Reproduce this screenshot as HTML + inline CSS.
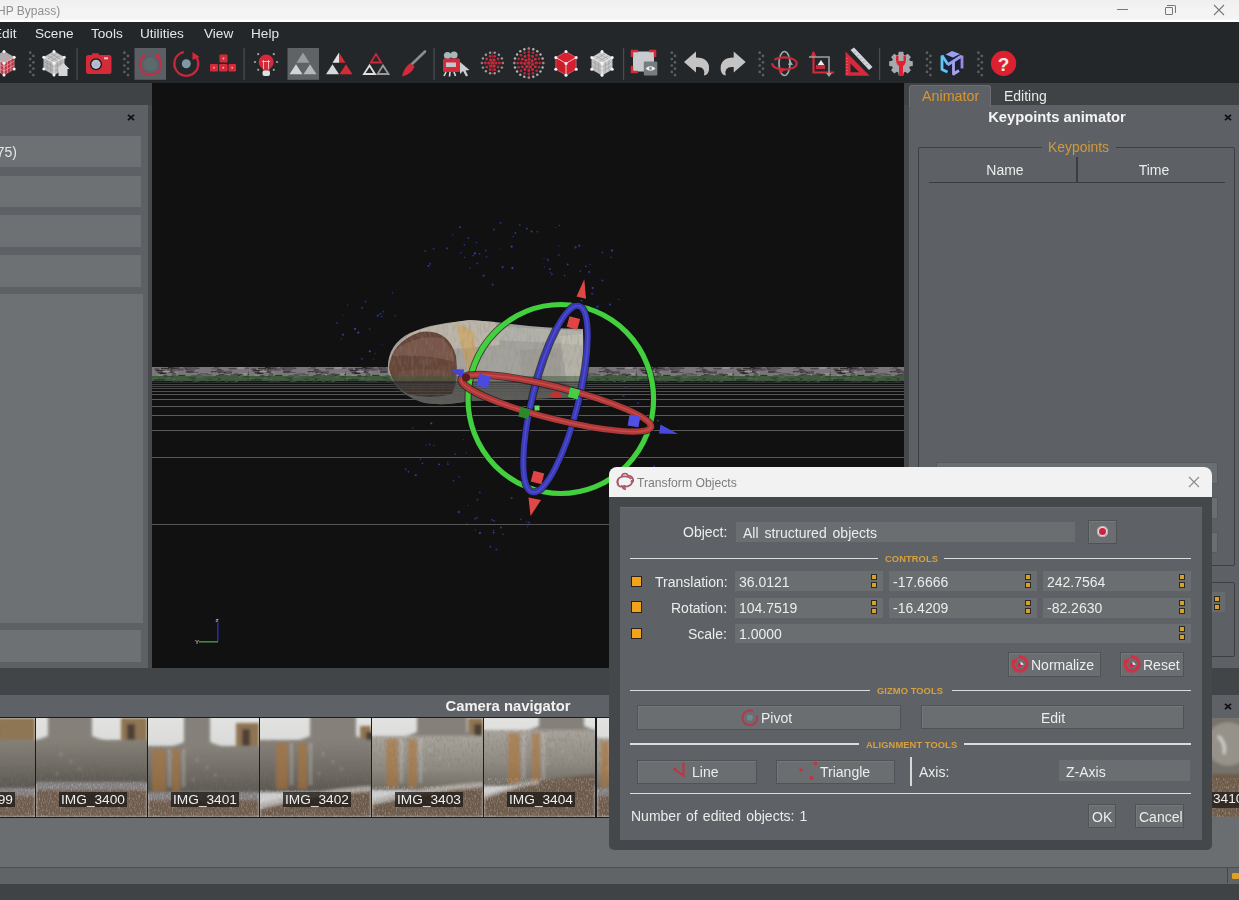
<!DOCTYPE html>
<html><head><meta charset="utf-8">
<style>
*{box-sizing:border-box;margin:0;padding:0}
html,body{width:1239px;height:900px;overflow:hidden;background:#3f4245;font-family:"Liberation Sans",sans-serif;position:relative}
.a{position:absolute}
.t{white-space:nowrap;position:absolute;will-change:transform}
</style></head><body>
<!-- title bar -->
<div class="a" style="left:0;top:0;width:1239px;height:22px;background:linear-gradient(#efefef,#f3f3f3 40%,#f4f4f6 85%,#fdfdfd 92%,#ffffff)"></div>
<div class="t" style="left:-3.5px;top:5.34px;font-size:12px;line-height:12px;color:#8e8e8e">HP Bypass)</div>
<div class="a" style="left:1117px;top:9px;width:11px;height:1px;background:#7a7a7a"></div>
<div class="a" style="left:1165px;top:7px;width:8px;height:8px;border:1px solid #777;border-radius:1px"></div>
<div class="a" style="left:1167px;top:5px;width:9px;height:8px;border-top:1px solid #777;border-right:1px solid #777;border-radius:0 2px 0 0"></div>
<svg class="a" style="left:1213px;top:4px" width="12" height="12"><path d="M1 1L11 11M11 1L1 11" stroke="#777" stroke-width="1.1"/></svg>

<!-- menu + toolbar -->
<div class="a" style="left:0;top:22px;width:1239px;height:61px;background:#24272a"></div>
<div class="t" style="left:-7px;top:26px;font-size:13.6px;color:#e6e6e6">Edit</div>
<div class="t" style="left:35px;top:26px;font-size:13.6px;color:#e6e6e6">Scene</div>
<div class="t" style="left:91px;top:26px;font-size:13.6px;color:#e6e6e6">Tools</div>
<div class="t" style="left:140px;top:26px;font-size:13.6px;color:#e6e6e6">Utilities</div>
<div class="t" style="left:204px;top:26px;font-size:13.6px;color:#e6e6e6">View</div>
<div class="t" style="left:251px;top:26px;font-size:13.6px;color:#e6e6e6">Help</div>

<!--B:toolbar-->
<svg class="a" style="left:0;top:44px" width="1239" height="39" viewBox="0 44 1239 39"><polygon points="4.0,51.4 14.2,57.3 4.0,63.2 -6.2,57.3" fill="#9fb0b2"/><polygon points="-6.2,57.3 4.0,63.2 4.0,75.0 -6.2,69.1" fill="#b8384a"/><polygon points="4.0,63.2 14.2,57.3 14.2,69.1 4.0,75.0" fill="#c63246"/><line x1="-2.8" y1="59.3" x2="-2.8" y2="71.1" stroke="#e0a0a8" stroke-width="0.7"/><line x1="7.4" y1="61.2" x2="7.4" y2="73.0" stroke="#e0a0a8" stroke-width="0.7"/><line x1="-6.2" y1="61.2" x2="4.0" y2="67.1" stroke="#e0a0a8" stroke-width="0.7"/><line x1="4.0" y1="67.1" x2="14.2" y2="61.2" stroke="#e0a0a8" stroke-width="0.7"/><line x1="-2.8" y1="55.3" x2="7.4" y2="61.2" stroke="#e0a0a8" stroke-width="0.7"/><line x1="7.4" y1="53.4" x2="-2.8" y2="59.3" stroke="#e0a0a8" stroke-width="0.7"/><line x1="0.6" y1="61.2" x2="0.6" y2="73.0" stroke="#e0a0a8" stroke-width="0.7"/><line x1="10.8" y1="59.3" x2="10.8" y2="71.1" stroke="#e0a0a8" stroke-width="0.7"/><line x1="-6.2" y1="65.2" x2="4.0" y2="71.1" stroke="#e0a0a8" stroke-width="0.7"/><line x1="4.0" y1="71.1" x2="14.2" y2="65.2" stroke="#e0a0a8" stroke-width="0.7"/><line x1="0.6" y1="53.4" x2="10.8" y2="59.3" stroke="#e0a0a8" stroke-width="0.7"/><line x1="10.8" y1="55.3" x2="0.6" y2="61.2" stroke="#e0a0a8" stroke-width="0.7"/><polyline points="-6.2,57.3 4.0,63.2 14.2,57.3" fill="none" stroke="#e8d0d4" stroke-width="0.9"/><line x1="4" y1="63.2" x2="4" y2="75.0" stroke="#e8d0d4" stroke-width="0.9"/><polygon points="4.0,51.4 14.2,57.3 14.2,69.1 4.0,75.0 -6.2,69.1 -6.2,57.3" fill="none" stroke="#e8d0d4" stroke-width="0.6" opacity="0.6"/><circle cx="4.0" cy="51.4" r="1.5" fill="#f4f4f4"/><circle cx="14.2" cy="57.3" r="1.5" fill="#f4f4f4"/><circle cx="14.2" cy="69.1" r="1.5" fill="#f4f4f4"/><circle cx="4.0" cy="75.0" r="1.5" fill="#f4f4f4"/><circle cx="-6.2" cy="69.1" r="1.5" fill="#f4f4f4"/><circle cx="-6.2" cy="57.3" r="1.5" fill="#f4f4f4"/><circle cx="4.0" cy="63.2" r="1.5" fill="#f4f4f4"/><circle cx="30.2" cy="52.7" r="1.35" fill="#5c5f62"/><circle cx="33.4" cy="55.9" r="1.35" fill="#5c5f62"/><circle cx="30.2" cy="59.1" r="1.35" fill="#5c5f62"/><circle cx="33.4" cy="62.3" r="1.35" fill="#5c5f62"/><circle cx="30.2" cy="65.5" r="1.35" fill="#5c5f62"/><circle cx="33.4" cy="68.7" r="1.35" fill="#5c5f62"/><circle cx="30.2" cy="71.9" r="1.35" fill="#5c5f62"/><circle cx="33.4" cy="75.1" r="1.35" fill="#5c5f62"/><polygon points="54.0,51.4 64.2,57.3 54.0,63.2 43.8,57.3" fill="#c8c8c8"/><polygon points="43.8,57.3 54.0,63.2 54.0,75.0 43.8,69.1" fill="#b4b4b4"/><polygon points="54.0,63.2 64.2,57.3 64.2,69.1 54.0,75.0" fill="#bebebe"/><line x1="47.2" y1="59.3" x2="47.2" y2="71.1" stroke="#9a9a9a" stroke-width="0.7"/><line x1="57.4" y1="61.2" x2="57.4" y2="73.0" stroke="#9a9a9a" stroke-width="0.7"/><line x1="43.8" y1="61.2" x2="54.0" y2="67.1" stroke="#9a9a9a" stroke-width="0.7"/><line x1="54.0" y1="67.1" x2="64.2" y2="61.2" stroke="#9a9a9a" stroke-width="0.7"/><line x1="47.2" y1="55.3" x2="57.4" y2="61.2" stroke="#9a9a9a" stroke-width="0.7"/><line x1="57.4" y1="53.4" x2="47.2" y2="59.3" stroke="#9a9a9a" stroke-width="0.7"/><line x1="50.6" y1="61.2" x2="50.6" y2="73.0" stroke="#9a9a9a" stroke-width="0.7"/><line x1="60.8" y1="59.3" x2="60.8" y2="71.1" stroke="#9a9a9a" stroke-width="0.7"/><line x1="43.8" y1="65.2" x2="54.0" y2="71.1" stroke="#9a9a9a" stroke-width="0.7"/><line x1="54.0" y1="71.1" x2="64.2" y2="65.2" stroke="#9a9a9a" stroke-width="0.7"/><line x1="50.6" y1="53.4" x2="60.8" y2="59.3" stroke="#9a9a9a" stroke-width="0.7"/><line x1="60.8" y1="55.3" x2="50.6" y2="61.2" stroke="#9a9a9a" stroke-width="0.7"/><polyline points="43.8,57.3 54.0,63.2 64.2,57.3" fill="none" stroke="#eeeeee" stroke-width="0.9"/><line x1="54" y1="63.2" x2="54" y2="75.0" stroke="#eeeeee" stroke-width="0.9"/><polygon points="54.0,51.4 64.2,57.3 64.2,69.1 54.0,75.0 43.8,69.1 43.8,57.3" fill="none" stroke="#eeeeee" stroke-width="0.6" opacity="0.6"/><circle cx="54.0" cy="51.4" r="1.5" fill="#f4f4f4"/><circle cx="64.2" cy="57.3" r="1.5" fill="#f4f4f4"/><circle cx="64.2" cy="69.1" r="1.5" fill="#f4f4f4"/><circle cx="54.0" cy="75.0" r="1.5" fill="#f4f4f4"/><circle cx="43.8" cy="69.1" r="1.5" fill="#f4f4f4"/><circle cx="43.8" cy="57.3" r="1.5" fill="#f4f4f4"/><circle cx="54.0" cy="63.2" r="1.5" fill="#f4f4f4"/><path d="M63.5 63 L69.5 69 L67.5 69 L67.5 76 L58.5 76 L58.5 69 L57 69 Z" fill="#d6d6d6"/><rect x="76.5" y="48" width="1.2" height="32" fill="#4a4d50"/><rect x="86" y="55" width="25.5" height="19" rx="2.5" fill="#d42a3a"/><rect x="92" y="53.3" width="7" height="3" rx="1" fill="#d42a3a"/><circle cx="96" cy="64.3" r="6" fill="#2a1a1e"/><circle cx="96" cy="64.3" r="4.6" fill="#a8c8d0"/><circle cx="96" cy="64.3" r="2.2" fill="#c8a8d8"/><rect x="104" y="57.3" width="4" height="2" fill="#f0c0c0"/><circle cx="124.4" cy="52.7" r="1.35" fill="#5c5f62"/><circle cx="128" cy="55.9" r="1.35" fill="#5c5f62"/><circle cx="124.4" cy="59.1" r="1.35" fill="#5c5f62"/><circle cx="128" cy="62.3" r="1.35" fill="#5c5f62"/><circle cx="124.4" cy="65.5" r="1.35" fill="#5c5f62"/><circle cx="128" cy="68.7" r="1.35" fill="#5c5f62"/><circle cx="124.4" cy="71.9" r="1.35" fill="#5c5f62"/><circle cx="128" cy="75.1" r="1.35" fill="#5c5f62"/><rect x="134.5" y="48" width="31.5" height="31.8" fill="#5a5f63"/><circle cx="150.3" cy="64.5" r="10.5" fill="none" stroke="#b83248" stroke-width="2.2" stroke-dasharray="52 14" transform="rotate(-40 150.3 64.5)"/><path d="M155 53.5 L161 55 L158 60.5 Z" fill="#c83048"/><circle cx="150.3" cy="64.5" r="7" fill="#5e7074" opacity="0.6"/><circle cx="186.3" cy="63.8" r="12" fill="none" stroke="#c8283c" stroke-width="2.2" stroke-dasharray="60 16" transform="rotate(-30 186.3 63.8)"/><path d="M192.5 52 L199.5 57 L192.5 60 Z" fill="#d8283c"/><circle cx="186.3" cy="63.8" r="4.5" fill="#7e98a4"/><rect x="219.5" y="54.5" width="8" height="8" rx="1" fill="#d42a3a"/><rect x="210" y="64" width="8" height="7.5" rx="1" fill="#d42a3a"/><rect x="219" y="64" width="8.5" height="7.5" rx="1" fill="#d42a3a"/><rect x="228.5" y="64" width="7.5" height="7.5" rx="1" fill="#d42a3a"/><circle cx="223.5" cy="58.5" r="0.9" fill="#f0b0b8"/><circle cx="214" cy="67.7" r="0.9" fill="#f0b0b8"/><circle cx="223.2" cy="67.7" r="0.9" fill="#f0b0b8"/><circle cx="232.2" cy="67.7" r="0.9" fill="#f0b0b8"/><rect x="243.5" y="48" width="1.2" height="32" fill="#4a4d50"/><circle cx="277.0" cy="62.0" r="1.1" fill="#b0a0a0"/><circle cx="273.8" cy="54.2" r="1.1" fill="#b0a0a0"/><circle cx="258.2" cy="54.2" r="1.1" fill="#b0a0a0"/><circle cx="255.0" cy="62.0" r="1.1" fill="#b0a0a0"/><circle cx="258.2" cy="69.8" r="1.1" fill="#b0a0a0"/><circle cx="273.8" cy="69.8" r="1.1" fill="#b0a0a0"/><circle cx="266.2" cy="62" r="7.5" fill="#d42a3a"/><path d="M262 66 L270.5 66 L269.5 71 L263 71Z" fill="#d42a3a"/><path d="M263.5 60 V69 M268.5 60 V69 M262 61.5 H270" stroke="#f4c0c8" stroke-width="0.9" fill="none"/><rect x="262.5" y="70.5" width="7.5" height="5.5" rx="2" fill="#d8e4e0"/><rect x="287.5" y="48" width="31.5" height="31.8" fill="#5f6366"/><polygon points="303,52.5 296.5,62.8 309.5,62.8" fill="#9a9c9e"/><polygon points="296,64.2 289.5,74.3 302.5,74.3" fill="#d4d4d4"/><polygon points="310,64.2 303.5,74.3 316.5,74.3" fill="#b8b8b8"/><polygon points="339,52.5 332.5,62.8 339,62.8" fill="#e4e4e4"/><polygon points="339,52.5 345.5,62.8 339,62.8" fill="#d42a3a"/><polygon points="332.5,64.2 326,74.3 339,74.3" fill="#d8d8d8"/><polygon points="346,64.2 339.5,74.3 352.5,74.3" fill="#d42a3a"/><polygon points="376,54 370.8,62.5 381.2,62.5" fill="none" stroke="#c8283c" stroke-width="1.8"/><polygon points="369.5,65.5 364,74 375,74" fill="none" stroke="#dedede" stroke-width="1.8"/><polygon points="383,65.5 377.5,74 388.5,74" fill="none" stroke="#9a9a9a" stroke-width="1.8"/><line x1="425" y1="51.5" x2="412" y2="64" stroke="#8a8c90" stroke-width="2.6" stroke-linecap="round"/><path d="M410.5 63 L414.5 66.5 Q412 74 402 76.5 Q403.5 68 410.5 63Z" fill="#d42a3a"/><rect x="433.5" y="48" width="1.2" height="32" fill="#4a4d50"/><circle cx="447.5" cy="55.5" r="3.6" fill="#a8b8b8"/><circle cx="454" cy="55" r="3.6" fill="#a8b8b8"/><rect x="443" y="58.5" width="17" height="13.5" rx="1.5" fill="#d42a3a"/><rect x="446" y="62.5" width="10" height="4.5" fill="#c0c8d0"/><path d="M446 72 L444 76 M450 72 L449.5 76.5 M454 72 L455.5 76" stroke="#dcdcdc" stroke-width="1.6"/><path d="M460 62 L460 74 L463 71 L466 76.5 L468 75.5 L465.5 70.5 L469.5 70 Z" fill="#c8d0d0"/><circle cx="502.9" cy="63.0" r="1.2" fill="#9a9a9a"/><circle cx="501.9" cy="67.6" r="1.2" fill="#9a9a9a"/><circle cx="498.9" cy="71.2" r="1.2" fill="#9a9a9a"/><circle cx="494.7" cy="73.2" r="1.2" fill="#9a9a9a"/><circle cx="490.1" cy="73.2" r="1.2" fill="#9a9a9a"/><circle cx="485.9" cy="71.2" r="1.2" fill="#9a9a9a"/><circle cx="482.9" cy="67.6" r="1.2" fill="#9a9a9a"/><circle cx="481.9" cy="63.0" r="1.2" fill="#9a9a9a"/><circle cx="482.9" cy="58.4" r="1.2" fill="#9a9a9a"/><circle cx="485.9" cy="54.8" r="1.2" fill="#9a9a9a"/><circle cx="490.1" cy="52.8" r="1.2" fill="#9a9a9a"/><circle cx="494.7" cy="52.8" r="1.2" fill="#9a9a9a"/><circle cx="498.9" cy="54.8" r="1.2" fill="#9a9a9a"/><circle cx="501.9" cy="58.4" r="1.2" fill="#9a9a9a"/><circle cx="499.4" cy="63.0" r="1.4" fill="#c8283c"/><circle cx="498.1" cy="67.1" r="1.4" fill="#c8283c"/><circle cx="494.6" cy="69.7" r="1.4" fill="#c8283c"/><circle cx="490.2" cy="69.7" r="1.4" fill="#c8283c"/><circle cx="486.7" cy="67.1" r="1.4" fill="#c8283c"/><circle cx="485.4" cy="63.0" r="1.4" fill="#c8283c"/><circle cx="486.7" cy="58.9" r="1.4" fill="#c8283c"/><circle cx="490.2" cy="56.3" r="1.4" fill="#c8283c"/><circle cx="494.6" cy="56.3" r="1.4" fill="#c8283c"/><circle cx="498.1" cy="58.9" r="1.4" fill="#c8283c"/><circle cx="496.0" cy="63.0" r="1.5" fill="#d02a3a"/><circle cx="494.2" cy="66.1" r="1.5" fill="#d02a3a"/><circle cx="490.6" cy="66.1" r="1.5" fill="#d02a3a"/><circle cx="488.8" cy="63.0" r="1.5" fill="#d02a3a"/><circle cx="490.6" cy="59.9" r="1.5" fill="#d02a3a"/><circle cx="494.2" cy="59.9" r="1.5" fill="#d02a3a"/><circle cx="492.4" cy="63" r="1.7" fill="#e03040"/><line x1="492.4" y1="51.5" x2="492.4" y2="74.5" stroke="#b02434" stroke-width="1.2" opacity="0.55"/><line x1="480.9" y1="63" x2="503.9" y2="63" stroke="#b02434" stroke-width="1.2" opacity="0.55"/><circle cx="543.3" cy="63.0" r="1.2" fill="#b4b4b4"/><circle cx="542.6" cy="67.5" r="1.2" fill="#b4b4b4"/><circle cx="540.5" cy="71.5" r="1.2" fill="#b4b4b4"/><circle cx="537.3" cy="74.7" r="1.2" fill="#b4b4b4"/><circle cx="533.3" cy="76.8" r="1.2" fill="#b4b4b4"/><circle cx="528.8" cy="77.5" r="1.2" fill="#b4b4b4"/><circle cx="524.3" cy="76.8" r="1.2" fill="#b4b4b4"/><circle cx="520.3" cy="74.7" r="1.2" fill="#b4b4b4"/><circle cx="517.1" cy="71.5" r="1.2" fill="#b4b4b4"/><circle cx="515.0" cy="67.5" r="1.2" fill="#b4b4b4"/><circle cx="514.3" cy="63.0" r="1.2" fill="#b4b4b4"/><circle cx="515.0" cy="58.5" r="1.2" fill="#b4b4b4"/><circle cx="517.1" cy="54.5" r="1.2" fill="#b4b4b4"/><circle cx="520.3" cy="51.3" r="1.2" fill="#b4b4b4"/><circle cx="524.3" cy="49.2" r="1.2" fill="#b4b4b4"/><circle cx="528.8" cy="48.5" r="1.2" fill="#b4b4b4"/><circle cx="533.3" cy="49.2" r="1.2" fill="#b4b4b4"/><circle cx="537.3" cy="51.3" r="1.2" fill="#b4b4b4"/><circle cx="540.5" cy="54.5" r="1.2" fill="#b4b4b4"/><circle cx="542.6" cy="58.5" r="1.2" fill="#b4b4b4"/><circle cx="539.8" cy="63.0" r="1.3" fill="#c02838"/><circle cx="539.0" cy="67.2" r="1.3" fill="#c02838"/><circle cx="536.6" cy="70.8" r="1.3" fill="#c02838"/><circle cx="533.0" cy="73.2" r="1.3" fill="#c02838"/><circle cx="528.8" cy="74.0" r="1.3" fill="#c02838"/><circle cx="524.6" cy="73.2" r="1.3" fill="#c02838"/><circle cx="521.0" cy="70.8" r="1.3" fill="#c02838"/><circle cx="518.6" cy="67.2" r="1.3" fill="#c02838"/><circle cx="517.8" cy="63.0" r="1.3" fill="#c02838"/><circle cx="518.6" cy="58.8" r="1.3" fill="#c02838"/><circle cx="521.0" cy="55.2" r="1.3" fill="#c02838"/><circle cx="524.6" cy="52.8" r="1.3" fill="#c02838"/><circle cx="528.8" cy="52.0" r="1.3" fill="#c02838"/><circle cx="533.0" cy="52.8" r="1.3" fill="#c02838"/><circle cx="536.6" cy="55.2" r="1.3" fill="#c02838"/><circle cx="539.0" cy="58.8" r="1.3" fill="#c02838"/><circle cx="536.3" cy="63.0" r="1.4" fill="#d02a3a"/><circle cx="535.3" cy="66.8" r="1.4" fill="#d02a3a"/><circle cx="532.5" cy="69.5" r="1.4" fill="#d02a3a"/><circle cx="528.8" cy="70.5" r="1.4" fill="#d02a3a"/><circle cx="525.0" cy="69.5" r="1.4" fill="#d02a3a"/><circle cx="522.3" cy="66.8" r="1.4" fill="#d02a3a"/><circle cx="521.3" cy="63.0" r="1.4" fill="#d02a3a"/><circle cx="522.3" cy="59.2" r="1.4" fill="#d02a3a"/><circle cx="525.0" cy="56.5" r="1.4" fill="#d02a3a"/><circle cx="528.8" cy="55.5" r="1.4" fill="#d02a3a"/><circle cx="532.5" cy="56.5" r="1.4" fill="#d02a3a"/><circle cx="535.3" cy="59.2" r="1.4" fill="#d02a3a"/><circle cx="532.6" cy="64.2" r="1.5" fill="#d02a3a"/><circle cx="530.3" cy="66.7" r="1.5" fill="#d02a3a"/><circle cx="526.8" cy="66.5" r="1.5" fill="#d02a3a"/><circle cx="524.8" cy="63.6" r="1.5" fill="#d02a3a"/><circle cx="525.9" cy="60.3" r="1.5" fill="#d02a3a"/><circle cx="529.1" cy="59.0" r="1.5" fill="#d02a3a"/><circle cx="532.1" cy="60.7" r="1.5" fill="#d02a3a"/><circle cx="528.8" cy="63" r="1.7" fill="#e03040"/><line x1="528.8" y1="47.5" x2="528.8" y2="78.5" stroke="#b02434" stroke-width="1.2" opacity="0.55"/><line x1="513.3" y1="63" x2="544.3" y2="63" stroke="#b02434" stroke-width="1.2" opacity="0.55"/><polygon points="566.0,51.6 576.2,57.5 566.0,63.4 555.8,57.5" fill="#dc2030"/><polygon points="555.8,57.5 566.0,63.4 566.0,75.2 555.8,69.3" fill="#c81e2c"/><polygon points="566.0,63.4 576.2,57.5 576.2,69.3 566.0,75.2" fill="#d41f2e"/><polyline points="555.8,57.5 566.0,63.4 576.2,57.5" fill="none" stroke="#ffd0d4" stroke-width="0.9"/><line x1="566" y1="63.4" x2="566" y2="75.2" stroke="#ffd0d4" stroke-width="0.9"/><polygon points="566.0,51.6 576.2,57.5 576.2,69.3 566.0,75.2 555.8,69.3 555.8,57.5" fill="none" stroke="#ffd0d4" stroke-width="0.6" opacity="0.6"/><circle cx="566.0" cy="51.6" r="1.5" fill="#f4f4f4"/><circle cx="576.2" cy="57.5" r="1.5" fill="#f4f4f4"/><circle cx="576.2" cy="69.3" r="1.5" fill="#f4f4f4"/><circle cx="566.0" cy="75.2" r="1.5" fill="#f4f4f4"/><circle cx="555.8" cy="69.3" r="1.5" fill="#f4f4f4"/><circle cx="555.8" cy="57.5" r="1.5" fill="#f4f4f4"/><circle cx="566.0" cy="63.4" r="1.5" fill="#f4f4f4"/><polygon points="602.0,51.6 612.2,57.5 602.0,63.4 591.8,57.5" fill="#d0d0d0"/><polygon points="591.8,57.5 602.0,63.4 602.0,75.2 591.8,69.3" fill="#c0c0c0"/><polygon points="602.0,63.4 612.2,57.5 612.2,69.3 602.0,75.2" fill="#c8c8c8"/><line x1="595.2" y1="59.5" x2="595.2" y2="71.3" stroke="#a0a0a0" stroke-width="0.7"/><line x1="605.4" y1="61.4" x2="605.4" y2="73.2" stroke="#a0a0a0" stroke-width="0.7"/><line x1="591.8" y1="61.4" x2="602.0" y2="67.3" stroke="#a0a0a0" stroke-width="0.7"/><line x1="602.0" y1="67.3" x2="612.2" y2="61.4" stroke="#a0a0a0" stroke-width="0.7"/><line x1="595.2" y1="55.5" x2="605.4" y2="61.4" stroke="#a0a0a0" stroke-width="0.7"/><line x1="605.4" y1="53.6" x2="595.2" y2="59.5" stroke="#a0a0a0" stroke-width="0.7"/><line x1="598.6" y1="61.4" x2="598.6" y2="73.2" stroke="#a0a0a0" stroke-width="0.7"/><line x1="608.8" y1="59.5" x2="608.8" y2="71.3" stroke="#a0a0a0" stroke-width="0.7"/><line x1="591.8" y1="65.4" x2="602.0" y2="71.3" stroke="#a0a0a0" stroke-width="0.7"/><line x1="602.0" y1="71.3" x2="612.2" y2="65.4" stroke="#a0a0a0" stroke-width="0.7"/><line x1="598.6" y1="53.6" x2="608.8" y2="59.5" stroke="#a0a0a0" stroke-width="0.7"/><line x1="608.8" y1="55.5" x2="598.6" y2="61.4" stroke="#a0a0a0" stroke-width="0.7"/><polyline points="591.8,57.5 602.0,63.4 612.2,57.5" fill="none" stroke="#f8f8f8" stroke-width="0.9"/><line x1="602" y1="63.4" x2="602" y2="75.2" stroke="#f8f8f8" stroke-width="0.9"/><polygon points="602.0,51.6 612.2,57.5 612.2,69.3 602.0,75.2 591.8,69.3 591.8,57.5" fill="none" stroke="#f8f8f8" stroke-width="0.6" opacity="0.6"/><circle cx="602.0" cy="51.6" r="1.5" fill="#f4f4f4"/><circle cx="612.2" cy="57.5" r="1.5" fill="#f4f4f4"/><circle cx="612.2" cy="69.3" r="1.5" fill="#f4f4f4"/><circle cx="602.0" cy="75.2" r="1.5" fill="#f4f4f4"/><circle cx="591.8" cy="69.3" r="1.5" fill="#f4f4f4"/><circle cx="591.8" cy="57.5" r="1.5" fill="#f4f4f4"/><circle cx="602.0" cy="63.4" r="1.5" fill="#f4f4f4"/><rect x="623.0" y="48" width="1.2" height="32" fill="#4a4d50"/><rect x="633" y="51.5" width="21" height="20" fill="#c8ccd0"/><path d="M632 57 V51 H638 M649 51 H655 V57 M632 66 V72 H638" fill="none" stroke="#d42a3a" stroke-width="2.5"/><rect x="643.8" y="61.5" width="13.5" height="14" rx="1" fill="#787b80"/><path d="M645.5 68.5 Q650.5 64 655.5 68.5 Q650.5 73 645.5 68.5Z" fill="#f0f0f0"/><rect x="649.3" y="67.3" width="2.4" height="2.4" fill="#787b80"/><circle cx="671.8" cy="52.7" r="1.35" fill="#5c5f62"/><circle cx="675" cy="55.9" r="1.35" fill="#5c5f62"/><circle cx="671.8" cy="59.1" r="1.35" fill="#5c5f62"/><circle cx="675" cy="62.3" r="1.35" fill="#5c5f62"/><circle cx="671.8" cy="65.5" r="1.35" fill="#5c5f62"/><circle cx="675" cy="68.7" r="1.35" fill="#5c5f62"/><circle cx="671.8" cy="71.9" r="1.35" fill="#5c5f62"/><circle cx="675" cy="75.1" r="1.35" fill="#5c5f62"/><path d="M684 62 L696 51.5 L696 57.5 Q710 57.5 709 70 Q708 75 704 75.5 Q706 66 696 67 L696 72.5 Z" fill="#c4c4c4"/><path d="M745.7 62 L733.7 51.5 L733.7 57.5 Q719.7 57.5 720.7 70 Q721.7 75 725.7 75.5 Q723.7 66 733.7 67 L733.7 72.5 Z" fill="#c4c4c4"/><circle cx="759.7" cy="52.7" r="1.35" fill="#5c5f62"/><circle cx="763" cy="55.9" r="1.35" fill="#5c5f62"/><circle cx="759.7" cy="59.1" r="1.35" fill="#5c5f62"/><circle cx="763" cy="62.3" r="1.35" fill="#5c5f62"/><circle cx="759.7" cy="65.5" r="1.35" fill="#5c5f62"/><circle cx="763" cy="68.7" r="1.35" fill="#5c5f62"/><circle cx="759.7" cy="71.9" r="1.35" fill="#5c5f62"/><circle cx="763" cy="75.1" r="1.35" fill="#5c5f62"/><ellipse cx="784.5" cy="63.5" rx="5.5" ry="12" fill="none" stroke="#9aaaa8" stroke-width="1.7"/><ellipse cx="784.5" cy="63.5" rx="12.3" ry="6.2" fill="none" stroke="#c8283c" stroke-width="2.2" stroke-dasharray="30 4 60" /><path d="M778 67 L786 69 L780 74Z" fill="#d0283c"/><path d="M790 60 L793 65 L788 65Z" fill="#9ab0b0"/><path d="M813.5 52 V72.5 H834" fill="none" stroke="#d42a3a" stroke-width="2.2"/><path d="M810.5 56.5 L813.5 51 L816.5 56.5Z" fill="#d42a3a"/><path d="M809 57 H829 V76" fill="none" stroke="#9aa2a2" stroke-width="1.6"/><path d="M826 73 L829 77 L832 73Z" fill="#9aa2a2"/><polygon points="821,60 825,66 817,66" fill="#f0f0f0"/><rect x="816" y="65" width="9" height="4" fill="#c8283c"/><polygon points="845.5,51.5 845.5,75.7 869.7,75.7" fill="#d42a3a"/><polygon points="850.5,63.5 850.5,72.2 859.2,72.2" fill="#222528"/><polygon points="850.5,50 854,47.5 872.5,67 869,70" fill="#d0d4d8"/><path d="M855.5 52 L854 53.5 M858.5 55 L857 56.5 M861.5 58 L860 59.5 M864.5 61 L863 62.5 M867.5 64 L866 65.5" stroke="#888" stroke-width="0.8"/><path d="M847 58 V74" stroke="#f0a0a8" stroke-width="0.8" stroke-dasharray="1 2"/><rect x="879.0" y="48" width="1.2" height="32" fill="#4a4d50"/><polygon points="912.8,61.3 912.8,65.9 909.8,66.4 909.2,67.8 910.9,70.3 907.7,73.5 905.2,71.8 903.8,72.4 903.3,75.4 898.7,75.4 898.2,72.4 896.8,71.8 894.3,73.5 891.1,70.3 892.8,67.8 892.2,66.4 889.2,65.9 889.2,61.3 892.2,60.8 892.8,59.4 891.1,56.9 894.3,53.7 896.8,55.4 898.2,54.8 898.7,51.8 903.3,51.8 903.8,54.8 905.2,55.4 907.7,53.7 910.9,56.9 909.2,59.4 909.8,60.8" fill="#a6aaae"/><path d="M896 56.5 Q895.5 64 899 66 L899 76 L903 76 L903 66 Q906.5 64 906 56.5 Q904.5 55 903.5 56 L903.5 61 L898.5 61 L898.5 56 Q897.5 55 896 56.5Z" fill="#e42030"/><circle cx="927" cy="52.7" r="1.35" fill="#5c5f62"/><circle cx="930.4" cy="55.9" r="1.35" fill="#5c5f62"/><circle cx="927" cy="59.1" r="1.35" fill="#5c5f62"/><circle cx="930.4" cy="62.3" r="1.35" fill="#5c5f62"/><circle cx="927" cy="65.5" r="1.35" fill="#5c5f62"/><circle cx="930.4" cy="68.7" r="1.35" fill="#5c5f62"/><circle cx="927" cy="71.9" r="1.35" fill="#5c5f62"/><circle cx="930.4" cy="75.1" r="1.35" fill="#5c5f62"/><path d="M941 58 L952 51.5 L963 57 L963 70 L953 75.5 L941 70Z" fill="#182038" opacity="0.9"/><path d="M942 55.5 V69.5 L947.5 72" fill="none" stroke="#62c4f4" stroke-width="2.8" stroke-linejoin="round"/><path d="M942 55.5 L948 64.5" fill="none" stroke="#62c4f4" stroke-width="2.8"/><path d="M945.5 54.5 L952 51 L960 54 L953 57.5Z" fill="#98a0f0"/><path d="M947.5 65 L961.5 56" fill="none" stroke="#9c9cec" stroke-width="2.8"/><path d="M962 55.5 V68.5" fill="none" stroke="#a088e0" stroke-width="2.8"/><path d="M953.5 62 V74 L959 70.5" fill="none" stroke="#a8a4e8" stroke-width="2.8" stroke-linejoin="round"/><circle cx="978.4" cy="52.7" r="1.35" fill="#5c5f62"/><circle cx="981.8" cy="55.9" r="1.35" fill="#5c5f62"/><circle cx="978.4" cy="59.1" r="1.35" fill="#5c5f62"/><circle cx="981.8" cy="62.3" r="1.35" fill="#5c5f62"/><circle cx="978.4" cy="65.5" r="1.35" fill="#5c5f62"/><circle cx="981.8" cy="68.7" r="1.35" fill="#5c5f62"/><circle cx="978.4" cy="71.9" r="1.35" fill="#5c5f62"/><circle cx="981.8" cy="75.1" r="1.35" fill="#5c5f62"/><circle cx="1003.6" cy="63.4" r="12.6" fill="#dc2030"/><text x="1003.6" y="70.5" text-anchor="middle" font-family="Liberation Sans" font-weight="700" font-size="19" fill="#f2e8e8">?</text></svg>
<!--E:toolbar-->

<!-- left panel -->
<div class="a" style="left:0;top:83px;width:152px;height:22px;background:#404346"></div>
<div class="a" style="left:0;top:105px;width:148px;height:563px;background:#5d6165"></div>
<div class="a" style="left:148px;top:105px;width:4px;height:563px;background:#47494c"></div>
<!--B:left-->
<div class="a" style="left:0px;top:136px;width:141px;height:31px;background:#6d7174;"></div>
<div class="a" style="left:0px;top:175.5px;width:141px;height:31.5px;background:#6d7174;"></div>
<div class="a" style="left:0px;top:215px;width:141px;height:32px;background:#6d7174;"></div>
<div class="a" style="left:0px;top:255px;width:141px;height:32px;background:#6d7174;"></div>
<div class="a" style="left:0px;top:294px;width:142.5px;height:329px;background:#6d7174;"></div>
<div class="a" style="left:0px;top:630px;width:141px;height:32px;background:#6d7174;"></div>
<div class="t" style="left:-7.7px;top:145.15px;font-size:14px;line-height:14px;color:#e6e6e6;font-weight:400;">(75)</div>
<svg class="a" style="left:127px;top:114px" width="8" height="7"><path d="M1 0.8L7 6.2M7 0.8L1 6.2" stroke="#111" stroke-width="1.8"/></svg>
<!--E:left-->

<!-- viewport -->
<div class="a" style="left:152px;top:83px;width:752px;height:585px;background:#111112;overflow:hidden"><!--B:vp-->
<svg class="a" style="left:0;top:0" width="752" height="585" viewBox="152 83 752 585"><defs>
<pattern id="bandp" width="97" height="15" patternUnits="userSpaceOnUse" x="152" y="367"><rect width="97" height="9" fill="#7a767a"/><rect y="9" width="97" height="5" fill="#3f5b3d"/><rect y="14" width="97" height="1" fill="#1a1a1a"/><rect x="62.0" y="0.2" width="4.7" height="1" fill="#4e4a4e"/><rect x="71.4" y="5.8" width="8.4" height="1" fill="#5a565a"/><rect x="40.9" y="0.3" width="4.3" height="1" fill="#5a565a"/><rect x="19.3" y="5.5" width="6.3" height="1" fill="#9a969a"/><rect x="57.2" y="6.9" width="3.0" height="1" fill="#9a969a"/><rect x="33.0" y="1.3" width="8.7" height="1.5" fill="#3a3638"/><rect x="9.0" y="0.8" width="8.1" height="1.5" fill="#3a3638"/><rect x="70.8" y="4.6" width="8.8" height="1.5" fill="#3a3638"/><rect x="53.5" y="7.0" width="6.7" height="1.5" fill="#5a565a"/><rect x="18.7" y="0.6" width="7.0" height="1.5" fill="#3a3638"/><rect x="83.0" y="7.4" width="5.3" height="1.5" fill="#2e2a2c"/><rect x="15.8" y="3.0" width="7.0" height="1" fill="#5a565a"/><rect x="61.6" y="4.5" width="4.5" height="1.5" fill="#9a969a"/><rect x="26.2" y="7.9" width="7.1" height="1" fill="#2e2a2c"/><rect x="81.8" y="6.6" width="4.4" height="1" fill="#2e2a2c"/><rect x="38.9" y="0.6" width="8.5" height="1.5" fill="#4e4a4e"/><rect x="63.6" y="3.4" width="8.5" height="1.5" fill="#4e4a4e"/><rect x="25.7" y="2.1" width="6.4" height="1.5" fill="#5a565a"/><rect x="41.6" y="5.0" width="5.2" height="1" fill="#5a565a"/><rect x="47.9" y="6.4" width="8.2" height="1" fill="#4e4a4e"/><rect x="76.8" y="3.6" width="3.4" height="1.5" fill="#5a565a"/><rect x="96.6" y="4.5" width="8.8" height="1" fill="#3a3638"/><rect x="66.1" y="4.6" width="4.6" height="1.5" fill="#3a3638"/><rect x="28.5" y="1.3" width="3.0" height="1.5" fill="#5a565a"/><rect x="73.9" y="4.3" width="3.6" height="1.5" fill="#5a565a"/><rect x="59.1" y="1.3" width="7.6" height="1" fill="#5a565a"/><rect x="31.4" y="0.2" width="8.6" height="1.5" fill="#4e4a4e"/><rect x="5.6" y="7.5" width="8.7" height="1" fill="#9a969a"/><rect x="79.2" y="8.3" width="6.2" height="1" fill="#4e4a4e"/><rect x="64.0" y="8.0" width="4.0" height="1.5" fill="#4e4a4e"/><rect x="90.1" y="6.4" width="7.1" height="1.5" fill="#9a969a"/><rect x="96.5" y="5.5" width="5.6" height="1.5" fill="#3a3638"/><rect x="24.0" y="0.5" width="3.1" height="1" fill="#5a565a"/><rect x="21.4" y="0.6" width="6.8" height="1" fill="#3a3638"/><rect x="87.8" y="7.3" width="3.4" height="1" fill="#2e2a2c"/><rect x="64.9" y="1.8" width="3.8" height="1.5" fill="#4e4a4e"/><rect x="76.1" y="6.9" width="4.1" height="1" fill="#9a969a"/><rect x="34.4" y="3.5" width="8.2" height="1" fill="#3a3638"/><rect x="5.9" y="6.2" width="7.8" height="1" fill="#4e4a4e"/><rect x="18.6" y="4.6" width="3.8" height="1" fill="#2e2a2c"/><rect x="44.9" y="7.4" width="3.5" height="1" fill="#3a3638"/><rect x="63.3" y="4.6" width="3.1" height="1" fill="#4e4a4e"/><rect x="16.1" y="4.1" width="4.3" height="1.5" fill="#3a3638"/><rect x="16.0" y="0.0" width="5.3" height="1.5" fill="#2e2a2c"/><rect x="41.0" y="8.1" width="9.0" height="1.5" fill="#4e4a4e"/><rect x="18.4" y="1.9" width="3.4" height="1" fill="#2e2a2c"/><rect x="5.5" y="5.0" width="6.0" height="1" fill="#3a3638"/><rect x="93.2" y="0.7" width="4.1" height="1" fill="#4e4a4e"/><rect x="39.2" y="8.0" width="6.4" height="1" fill="#5a565a"/><rect x="8.0" y="5.6" width="6.4" height="1.5" fill="#2e2a2c"/><rect x="19.8" y="6.1" width="4.4" height="1.5" fill="#4e4a4e"/><rect x="65.2" y="2.5" width="4.9" height="1" fill="#3a3638"/><rect x="44.5" y="8.5" width="9.0" height="1" fill="#5a565a"/><rect x="20.7" y="2.3" width="8.6" height="1" fill="#4e4a4e"/><rect x="35.8" y="1.3" width="8.0" height="1.5" fill="#5a565a"/><rect x="95.4" y="6.9" width="6.2" height="1.5" fill="#3a3638"/><rect x="91.1" y="1.1" width="3.7" height="1" fill="#5a565a"/><rect x="15.1" y="2.4" width="4.3" height="1.5" fill="#4e4a4e"/><rect x="66.7" y="7.2" width="6.0" height="1.5" fill="#3a3638"/><rect x="9.0" y="3.6" width="4.7" height="1" fill="#2e2a2c"/><rect x="74.8" y="5.4" width="4.6" height="1.5" fill="#5a565a"/><rect x="68.4" y="4.8" width="3.7" height="1" fill="#5a565a"/><rect x="3.5" y="3.1" width="6.3" height="1.5" fill="#4e4a4e"/><rect x="4.1" y="3.1" width="8.6" height="1" fill="#2e2a2c"/><rect x="20.4" y="2.1" width="3.6" height="1.5" fill="#5a565a"/><rect x="72.7" y="7.9" width="4.4" height="1" fill="#4e4a4e"/><rect x="85.5" y="0.2" width="7.4" height="1.5" fill="#9a969a"/><rect x="77.8" y="7.3" width="7.9" height="1.5" fill="#4e4a4e"/><rect x="76.4" y="0.9" width="8.2" height="1.5" fill="#4e4a4e"/><rect x="19.4" y="7.8" width="5.1" height="1" fill="#4e4a4e"/><rect x="2.3" y="1.6" width="5.0" height="1" fill="#2e2a2c"/><rect x="34.1" y="4.3" width="7.1" height="1.5" fill="#3a3638"/><rect x="11.2" y="8.2" width="4.1" height="1.5" fill="#3a3638"/><rect x="10.5" y="3.7" width="7.4" height="1.5" fill="#9a969a"/><rect x="58.8" y="4.3" width="5.3" height="1" fill="#2e2a2c"/><rect x="4.3" y="11.6" width="4.1" height="1" fill="#2e4a2c"/><rect x="41.8" y="14.7" width="5.7" height="1.5" fill="#4e6a4a"/><rect x="82.3" y="13.3" width="3.2" height="1.5" fill="#4e6a4a"/><rect x="39.6" y="11.4" width="3.2" height="1" fill="#263a24"/><rect x="40.8" y="14.6" width="4.7" height="1" fill="#4e6a4a"/><rect x="55.2" y="11.4" width="5.3" height="1.5" fill="#2e4a2c"/><rect x="20.4" y="13.7" width="4.4" height="1.5" fill="#2e4a2c"/><rect x="42.9" y="13.1" width="4.0" height="1" fill="#4e6a4a"/><rect x="8.2" y="12.1" width="4.5" height="1.5" fill="#263a24"/><rect x="79.4" y="13.5" width="4.7" height="1" fill="#263a24"/><rect x="14.3" y="9.3" width="5.9" height="1" fill="#2e4a2c"/><rect x="40.2" y="12.8" width="2.8" height="1.5" fill="#2e4a2c"/><rect x="38.8" y="9.9" width="4.8" height="1" fill="#2e4a2c"/><rect x="21.2" y="13.8" width="4.8" height="1.5" fill="#263a24"/><rect x="54.1" y="14.5" width="2.5" height="1" fill="#2e4a2c"/><rect x="64.8" y="14.9" width="4.4" height="1.5" fill="#4e6a4a"/><rect x="79.1" y="14.4" width="3.7" height="1.5" fill="#263a24"/><rect x="72.1" y="11.8" width="3.0" height="1" fill="#4e6a4a"/><rect x="26.9" y="13.7" width="3.9" height="1" fill="#2e4a2c"/><rect x="42.7" y="13.3" width="2.9" height="1.5" fill="#2e4a2c"/><rect x="86.6" y="9.5" width="2.6" height="1.5" fill="#4e6a4a"/><rect x="14.8" y="10.3" width="3.7" height="1.5" fill="#4e6a4a"/><rect x="45.2" y="9.4" width="5.3" height="1.5" fill="#4e6a4a"/><rect x="91.8" y="9.1" width="5.5" height="1.5" fill="#2e4a2c"/><rect x="0.6" y="11.1" width="5.0" height="1.5" fill="#4e6a4a"/><rect x="72.5" y="12.3" width="4.4" height="1" fill="#2e4a2c"/><rect x="21.3" y="11.6" width="2.1" height="1.5" fill="#4e6a4a"/><rect x="65.9" y="11.4" width="2.7" height="1.5" fill="#263a24"/><rect x="95.1" y="12.2" width="5.6" height="1" fill="#263a24"/><rect x="62.3" y="9.8" width="3.8" height="1" fill="#2e4a2c"/><rect x="36.8" y="10.3" width="3.3" height="1.5" fill="#2e4a2c"/><rect x="72.9" y="14.0" width="3.0" height="1" fill="#2e4a2c"/><rect x="1.9" y="12.2" width="6.0" height="1.5" fill="#263a24"/><rect x="63.1" y="13.7" width="4.6" height="1" fill="#263a24"/><rect x="19.3" y="9.1" width="2.6" height="1" fill="#2e4a2c"/></pattern>
<linearGradient id="pipebody" x1="0" y1="0" x2="0" y2="1">
<stop offset="0" stop-color="#c8c0b2"/><stop offset="0.35" stop-color="#b4ada2"/><stop offset="0.7" stop-color="#9a958c"/><stop offset="1" stop-color="#8a8278"/>
</linearGradient>
<radialGradient id="capface" cx="0.55" cy="0.45" r="0.6">
<stop offset="0" stop-color="#7a4438"/><stop offset="0.7" stop-color="#6c3e32"/><stop offset="1" stop-color="#8a6a52"/>
</radialGradient>
<linearGradient id="rust" x1="0" y1="0" x2="1" y2="0">
<stop offset="0" stop-color="#c89a50" stop-opacity="0"/><stop offset="0.5" stop-color="#d09a48" stop-opacity="0.8"/><stop offset="1" stop-color="#c89a50" stop-opacity="0"/>
</linearGradient>
<filter id="soft" x="-5%" y="-5%" width="110%" height="110%"><feGaussianBlur stdDeviation="0.6"/></filter>
</defs><rect x="152" y="367" width="752" height="15" fill="url(#bandp)"/><rect x="152" y="382" width="752" height="1" fill="#2e2a32"/><rect x="152" y="384" width="752" height="1" fill="#444444"/><rect x="152" y="386" width="752" height="1" fill="#484848"/><rect x="152" y="388" width="752" height="1" fill="#4a4a4a"/><rect x="152" y="391" width="752" height="1" fill="#505050"/><rect x="152" y="394" width="752" height="1" fill="#565656"/><rect x="152" y="399" width="752" height="1" fill="#5a5a5a"/><rect x="152" y="406" width="752" height="1" fill="#5c5c5c"/><rect x="152" y="415" width="752" height="1" fill="#5c5c5c"/><rect x="152" y="430" width="752" height="1" fill="#5a5a5a"/><rect x="152" y="457" width="752" height="1" fill="#585858"/><rect x="152" y="524" width="752" height="1" fill="#565656"/><circle cx="502.6" cy="267.2" r="1.1" fill="#2c3890"/><circle cx="585.8" cy="266.3" r="0.9" fill="#2c3890"/><circle cx="559.1" cy="246.3" r="0.7" fill="#222c70"/><circle cx="477.3" cy="263.4" r="1.1" fill="#222c70"/><circle cx="590.1" cy="264.6" r="0.7" fill="#2c3890"/><circle cx="464.3" cy="244.7" r="0.7" fill="#2c3890"/><circle cx="485.8" cy="250.5" r="0.9" fill="#27327e"/><circle cx="446.9" cy="248.3" r="1.1" fill="#27327e"/><circle cx="580.3" cy="271.0" r="0.7" fill="#3442a0"/><circle cx="589.1" cy="272.0" r="1.1" fill="#2c3890"/><circle cx="468.3" cy="238.2" r="1.1" fill="#222c70"/><circle cx="531.6" cy="231.5" r="0.9" fill="#3442a0"/><circle cx="492.6" cy="284.7" r="1.1" fill="#27327e"/><circle cx="567.7" cy="264.4" r="0.9" fill="#3442a0"/><circle cx="513.1" cy="236.4" r="0.7" fill="#2c3890"/><circle cx="479.5" cy="253.9" r="0.9" fill="#27327e"/><circle cx="579.3" cy="245.7" r="1.1" fill="#2c3890"/><circle cx="526.9" cy="228.6" r="0.9" fill="#3442a0"/><circle cx="494.0" cy="229.6" r="1.1" fill="#222c70"/><circle cx="547.8" cy="259.5" r="0.9" fill="#222c70"/><circle cx="511.7" cy="246.6" r="1.1" fill="#3442a0"/><circle cx="460.0" cy="227.2" r="0.9" fill="#3442a0"/><circle cx="500.4" cy="222.8" r="0.9" fill="#2c3890"/><circle cx="575.5" cy="247.4" r="1.1" fill="#2c3890"/><circle cx="473.3" cy="255.6" r="0.9" fill="#27327e"/><circle cx="515.4" cy="233.0" r="0.9" fill="#2c3890"/><circle cx="551.8" cy="274.2" r="0.9" fill="#27327e"/><circle cx="559.2" cy="225.5" r="0.9" fill="#222c70"/><circle cx="602.3" cy="252.5" r="0.9" fill="#27327e"/><circle cx="544.5" cy="266.9" r="0.7" fill="#27327e"/><circle cx="610.9" cy="257.4" r="0.7" fill="#3442a0"/><circle cx="512.4" cy="268.1" r="1.1" fill="#3442a0"/><circle cx="476.5" cy="242.4" r="0.7" fill="#2c3890"/><circle cx="430.1" cy="263.8" r="1.1" fill="#222c70"/><circle cx="469.7" cy="268.1" r="0.9" fill="#222c70"/><circle cx="544.0" cy="258.5" r="0.7" fill="#222c70"/><circle cx="550.5" cy="272.4" r="0.7" fill="#2c3890"/><circle cx="558.9" cy="255.0" r="0.7" fill="#3442a0"/><circle cx="500.0" cy="248.9" r="0.7" fill="#222c70"/><circle cx="549.9" cy="269.1" r="0.9" fill="#3442a0"/><circle cx="486.5" cy="256.9" r="0.9" fill="#222c70"/><circle cx="464.6" cy="257.4" r="0.7" fill="#2c3890"/><circle cx="519.8" cy="224.9" r="0.9" fill="#27327e"/><circle cx="474.9" cy="253.4" r="1.1" fill="#3442a0"/><circle cx="564.6" cy="275.5" r="0.7" fill="#3442a0"/><circle cx="612.1" cy="250.6" r="1.1" fill="#3442a0"/><circle cx="425.3" cy="251.2" r="0.9" fill="#27327e"/><circle cx="433.6" cy="248.7" r="0.9" fill="#27327e"/><circle cx="452.7" cy="234.7" r="0.7" fill="#27327e"/><circle cx="555.8" cy="227.6" r="0.7" fill="#27327e"/><circle cx="460.7" cy="252.7" r="0.7" fill="#2c3890"/><circle cx="537.1" cy="231.7" r="0.7" fill="#3442a0"/><circle cx="428.5" cy="266.0" r="0.9" fill="#3442a0"/><circle cx="548.0" cy="260.4" r="0.9" fill="#27327e"/><circle cx="483.6" cy="275.7" r="1.1" fill="#2c3890"/><circle cx="342.9" cy="334.7" r="1.1" fill="#2c3890"/><circle cx="382.0" cy="316.6" r="0.9" fill="#27327e"/><circle cx="358.3" cy="332.6" r="1.1" fill="#3442a0"/><circle cx="408.3" cy="352.7" r="1.1" fill="#222c70"/><circle cx="341.4" cy="338.9" r="0.7" fill="#27327e"/><circle cx="381.9" cy="344.1" r="0.7" fill="#222c70"/><circle cx="380.3" cy="313.9" r="1.1" fill="#222c70"/><circle cx="362.0" cy="307.8" r="1.1" fill="#27327e"/><circle cx="410.4" cy="335.4" r="1.1" fill="#2c3890"/><circle cx="336.9" cy="322.8" r="0.9" fill="#27327e"/><circle cx="383.5" cy="311.6" r="0.9" fill="#27327e"/><circle cx="369.8" cy="351.3" r="1.1" fill="#3442a0"/><circle cx="373.5" cy="359.1" r="0.7" fill="#2c3890"/><circle cx="395.1" cy="315.7" r="0.9" fill="#222c70"/><circle cx="392.5" cy="292.7" r="0.7" fill="#27327e"/><circle cx="369.6" cy="329.1" r="0.9" fill="#27327e"/><circle cx="347.6" cy="305.0" r="0.7" fill="#27327e"/><circle cx="394.8" cy="357.5" r="0.7" fill="#2c3890"/><circle cx="361.8" cy="358.8" r="1.1" fill="#222c70"/><circle cx="377.8" cy="315.7" r="1.1" fill="#2c3890"/><circle cx="375.2" cy="353.7" r="0.7" fill="#222c70"/><circle cx="342.7" cy="315.2" r="0.7" fill="#222c70"/><circle cx="356.9" cy="369.5" r="1.1" fill="#27327e"/><circle cx="365.5" cy="301.7" r="1.1" fill="#222c70"/><circle cx="355.1" cy="328.9" r="1.1" fill="#3442a0"/><circle cx="463.4" cy="439.6" r="0.7" fill="#222c70"/><circle cx="439.1" cy="464.3" r="0.9" fill="#3442a0"/><circle cx="447.6" cy="462.6" r="0.7" fill="#27327e"/><circle cx="412.8" cy="427.9" r="0.7" fill="#3442a0"/><circle cx="453.4" cy="480.7" r="0.9" fill="#27327e"/><circle cx="429.7" cy="444.3" r="0.9" fill="#27327e"/><circle cx="466.4" cy="453.0" r="0.7" fill="#222c70"/><circle cx="455.4" cy="454.2" r="0.9" fill="#27327e"/><circle cx="422.5" cy="463.3" r="0.9" fill="#2c3890"/><circle cx="415.8" cy="475.2" r="1.1" fill="#2c3890"/><circle cx="408.5" cy="471.7" r="0.9" fill="#2c3890"/><circle cx="459.1" cy="476.8" r="0.7" fill="#2c3890"/><circle cx="448.0" cy="464.2" r="0.7" fill="#3442a0"/><circle cx="431.3" cy="423.3" r="1.1" fill="#3442a0"/><circle cx="405.7" cy="469.3" r="1.1" fill="#222c70"/><circle cx="426.3" cy="445.0" r="0.7" fill="#27327e"/><circle cx="420.4" cy="459.3" r="0.7" fill="#2c3890"/><circle cx="433.7" cy="445.4" r="0.7" fill="#2c3890"/><circle cx="493.7" cy="530.4" r="0.7" fill="#3442a0"/><circle cx="520.8" cy="519.3" r="0.9" fill="#27327e"/><circle cx="527.5" cy="526.8" r="0.7" fill="#27327e"/><circle cx="493.7" cy="532.7" r="0.9" fill="#3442a0"/><circle cx="477.2" cy="517.4" r="0.9" fill="#27327e"/><circle cx="490.4" cy="546.7" r="0.9" fill="#2c3890"/><circle cx="529.1" cy="522.5" r="1.1" fill="#27327e"/><circle cx="475.3" cy="518.7" r="0.9" fill="#2c3890"/><circle cx="477.4" cy="499.7" r="1.1" fill="#222c70"/><circle cx="458.8" cy="512.0" r="1.1" fill="#3442a0"/><circle cx="479.9" cy="492.5" r="0.9" fill="#27327e"/><circle cx="511.6" cy="498.1" r="1.1" fill="#27327e"/><circle cx="475.5" cy="530.0" r="0.7" fill="#27327e"/><circle cx="526.5" cy="522.1" r="0.9" fill="#222c70"/><circle cx="501.0" cy="527.5" r="0.9" fill="#3442a0"/><circle cx="467.9" cy="505.5" r="0.7" fill="#222c70"/><circle cx="503.2" cy="534.3" r="0.7" fill="#3442a0"/><circle cx="479.9" cy="533.0" r="1.1" fill="#3442a0"/><circle cx="496.4" cy="549.5" r="0.9" fill="#27327e"/><circle cx="494.2" cy="520.8" r="0.9" fill="#2c3890"/><circle cx="467.0" cy="523.4" r="0.7" fill="#27327e"/><circle cx="492.2" cy="519.9" r="0.9" fill="#2c3890"/><circle cx="654.2" cy="466.1" r="0.9" fill="#2c3890"/><circle cx="632.7" cy="475.3" r="0.7" fill="#27327e"/><circle cx="626.1" cy="387.6" r="1.1" fill="#222c70"/><circle cx="642.3" cy="379.3" r="0.9" fill="#27327e"/><circle cx="635.0" cy="476.1" r="0.7" fill="#2c3890"/><circle cx="651.5" cy="384.8" r="1.1" fill="#222c70"/><circle cx="637.3" cy="376.2" r="0.7" fill="#2c3890"/><circle cx="650.6" cy="389.3" r="1.1" fill="#27327e"/><circle cx="645.3" cy="436.3" r="1.1" fill="#3442a0"/><circle cx="657.8" cy="420.7" r="0.9" fill="#2c3890"/><circle cx="623.5" cy="395.8" r="1.1" fill="#27327e"/><circle cx="638.3" cy="430.2" r="0.7" fill="#2c3890"/><circle cx="635.8" cy="417.0" r="1.1" fill="#222c70"/><circle cx="639.9" cy="446.4" r="0.9" fill="#27327e"/><circle cx="638.2" cy="403.0" r="1.1" fill="#222c70"/><circle cx="581.5" cy="300.6" r="0.9" fill="#3442a0"/><circle cx="602.5" cy="280.5" r="1.1" fill="#27327e"/><circle cx="610.2" cy="304.5" r="0.9" fill="#3442a0"/><circle cx="592.1" cy="293.7" r="0.9" fill="#2c3890"/><circle cx="570.5" cy="302.2" r="0.7" fill="#27327e"/><circle cx="592.7" cy="288.0" r="1.1" fill="#3442a0"/><circle cx="580.0" cy="303.8" r="0.7" fill="#27327e"/><circle cx="596.7" cy="306.8" r="0.9" fill="#2c3890"/><circle cx="598.0" cy="306.7" r="1.1" fill="#222c70"/><circle cx="618.6" cy="299.4" r="0.7" fill="#2c3890"/><defs><filter id="ptex" x="0" y="0" width="100%" height="100%"><feTurbulence type="fractalNoise" baseFrequency="0.35 0.12" numOctaves="2" seed="5"/><feColorMatrix values="0 0 0 0 0.25  0 0 0 0 0.24  0 0 0 0 0.22  0 0 0 -2.2 1.25"/><feComposite in2="SourceGraphic" operator="in"/></filter></defs><g filter="url(#soft)"><path d="M388 372 Q386 345 410 333 Q430 325 470 320 L495 322 Q540 328 583 329 L585 397 L520 399 L470 401 Q445 406 425 403 Q398 396 388 372Z" fill="#a4a29c"/><path d="M395 350 Q405 332 430 326 Q450 322 470 320 L495 322 L500 345 L440 350 L400 360Z" fill="#c4bcae" opacity="0.75"/><path d="M495 326 Q540 329 583 331 L583 345 Q540 342 495 340Z" fill="#bcbab4" opacity="0.6"/><path d="M456 324 Q466 326 474 332 L478 378 L470 380 Q462 350 456 324Z" fill="#d8a040" opacity="0.5"/><path d="M560 336 L583 334 L585 392 L568 392Z" fill="#d8d0c0" opacity="0.35"/><path d="M520 350 L560 348 L562 392 L522 394Z" fill="#8a8880" opacity="0.25"/><path d="M389 368 Q391 342 420 332 Q448 328 456 356 Q459 380 452 394 Q430 400 408 394 Q392 386 389 368Z" fill="#664438"/><path d="M393 352 Q415 334 442 338 Q453 348 455 362 Q425 354 393 356Z" fill="#8a6a5a" opacity="0.5"/><path d="M398 372 Q420 366 452 372 L452 378 Q420 374 398 380Z" fill="#7a5a4c" opacity="0.4"/></g><path d="M388 372 Q386 345 410 333 Q430 325 470 320 L495 322 Q540 328 583 329 L585 397 L520 399 L470 401 Q445 406 425 403 Q398 396 388 372Z" fill="#000" filter="url(#ptex)" opacity="0.35"/><path d="M388 381 L585 381 L585 397 L520 399 L470 401 Q445 406 425 403 Q398 396 388 381Z" fill="#202420" opacity="0.55"/><rect x="386" y="376" width="200" height="5" fill="#3f5b3d" opacity="0.5"/><rect x="386" y="382" width="200" height="1" fill="#2e2a32" opacity="0.6"/><rect x="386" y="384" width="200" height="1" fill="#444444" opacity="0.6"/><rect x="386" y="386" width="200" height="1" fill="#484848" opacity="0.6"/><rect x="386" y="388" width="200" height="1" fill="#4a4a4a" opacity="0.6"/><rect x="386" y="391" width="200" height="1" fill="#505050" opacity="0.6"/><rect x="386" y="394" width="200" height="1" fill="#565656" opacity="0.6"/><rect x="386" y="399" width="200" height="1" fill="#5a5a5a" opacity="0.6"/><ellipse cx="560.8" cy="399" rx="92.8" ry="94.5" fill="none" stroke="#141414" stroke-width="7" opacity="0.7"/><ellipse cx="560.8" cy="399" rx="92.8" ry="94.5" fill="none" stroke="#42d03e" stroke-width="5.2"/><ellipse cx="555.5" cy="399" rx="23" ry="96" transform="rotate(14 555.5 399)" fill="none" stroke="#141414" stroke-width="8" opacity="0.7"/><ellipse cx="555.5" cy="399" rx="23" ry="96" transform="rotate(14 555.5 399)" fill="none" stroke="#3a3ab8" stroke-width="6"/><ellipse cx="555.5" cy="399" rx="23" ry="96" transform="rotate(14 555.5 399)" fill="none" stroke="#5a5ae0" stroke-width="1.5" opacity="0.6"/><ellipse cx="556.2" cy="403.2" rx="97.8" ry="16" transform="rotate(14.1 556.2 403.2)" fill="none" stroke="#141414" stroke-width="8" opacity="0.7"/><ellipse cx="556.2" cy="403.2" rx="97.8" ry="16" transform="rotate(14.1 556.2 403.2)" fill="none" stroke="#b03838" stroke-width="6.2"/><ellipse cx="556.2" cy="403.2" rx="97.8" ry="16" transform="rotate(14.1 556.2 403.2)" fill="none" stroke="#d85858" stroke-width="1.5" opacity="0.6"/><polygon points="584.3,279.3 576.5,296.4 586,298.8" fill="#e04848"/><polygon points="530.5,516 528.5,497.5 541,500" fill="#e04848"/><polygon points="449,369 464,369.5 463,378.5" fill="#4444d8"/><circle cx="466" cy="377.5" r="4" fill="#5a1c1c"/><polygon points="678,434 660.5,424.5 659,433.5" fill="#4848e0"/><rect x="567.9" y="317.4" width="11" height="11" fill="#e04444" transform="rotate(15 573.4 322.9)"/><rect x="532.0" y="472.0" width="11" height="11" fill="#e04444" transform="rotate(15 537.5 477.5)"/><rect x="477.6" y="375.0" width="12" height="12" fill="#4a4ae0" transform="rotate(15 483.6 381)"/><rect x="628.5" y="415.5" width="11" height="11" fill="#5050e8" transform="rotate(10 634 421)"/><rect x="569.0" y="388.5" width="10" height="10" fill="#44d044" transform="rotate(15 574 393.5)"/><rect x="519.4" y="408.0" width="10" height="10" fill="#2a8a2a" transform="rotate(15 524.4 413)"/><rect x="534.5" y="405.5" width="5" height="5" fill="#60e060" transform="rotate(0 537 408)"/><ellipse cx="556" cy="395" rx="6" ry="3" fill="#c83030"/><rect x="217" y="622.5" width="1.6" height="19" fill="#2a2aa0"/><rect x="199" y="641" width="19" height="1.6" fill="#3a8a3a"/><text x="215.5" y="622" font-family="Liberation Sans" font-size="6" fill="#e0e0e0">z</text><text x="195" y="644" font-family="Liberation Sans" font-size="6" fill="#e0e0e0">Y</text></svg><!--E:vp--></div>

<!-- right panel -->
<div class="a" style="left:904px;top:83px;width:335px;height:22px;background:#404346"></div>
<div class="a" style="left:904px;top:105px;width:5px;height:563px;background:#46494c"></div>
<div class="a" style="left:909px;top:105px;width:330px;height:563px;background:#5d6165"></div>
<!--B:right-->
<div class="a" style="left:909px;top:85px;width:82px;height:22px;background:#5d6165;border:1px solid #6b6f73;border-bottom:none;border-radius:3px 3px 0 0"></div>
<div class="t" style="left:921.9px;top:88.90px;font-size:14.3px;line-height:14.3px;color:#d8962e;font-weight:400;">Animator</div>
<div class="t" style="left:1004.4px;top:89.15px;font-size:14px;line-height:14px;color:#e8e8e8;font-weight:400;">Editing</div>
<div class="t" style="left:756.8px;width:600px;text-align:center;top:110.31px;font-size:14.75px;line-height:14.75px;color:#f4f4f4;font-weight:700;">Keypoints animator</div>
<svg class="a" style="left:1224px;top:114px" width="8" height="7"><path d="M1 0.8L7 6.2M7 0.8L1 6.2" stroke="#111" stroke-width="1.8"/></svg>
<div class="a" style="left:918px;top:147px;width:317px;height:419px;border:1px solid #3c3f42;border-radius:2px"></div>
<div class="a" style="left:1042px;top:144px;width:74px;height:8px;background:#5d6165;"></div>
<div class="t" style="left:1047.7px;top:140.93px;font-size:13.9px;line-height:13.9px;color:#d09a3a;font-weight:400;">Keypoints</div>
<div class="a" style="left:929px;top:181.5px;width:296px;height:1.5px;background:#3a3d40;"></div>
<div class="a" style="left:1076px;top:156.5px;width:1.5px;height:25.5px;background:#3a3d40;"></div>
<div class="t" style="left:705.4px;width:600px;text-align:center;top:162.85px;font-size:14px;line-height:14px;color:#ececec;font-weight:400;">Name</div>
<div class="t" style="left:854.0999999999999px;width:600px;text-align:center;top:162.85px;font-size:14px;line-height:14px;color:#ececec;font-weight:400;">Time</div>
<div class="a" style="left:936px;top:462px;width:281.5px;height:22px;background:#6a6e71;border:1px solid #575b5e"></div>
<div class="a" style="left:936px;top:497px;width:281.5px;height:22px;background:#6a6e71;border:1px solid #575b5e"></div>
<div class="a" style="left:936px;top:532px;width:281.5px;height:21px;background:#6a6e71;border:1px solid #575b5e"></div>
<div class="a" style="left:918px;top:582px;width:317px;height:75px;border:1px solid #3c3f42;border-radius:2px"></div>
<div class="a" style="left:1211px;top:592px;width:14px;height:20px;background:#676b6e;"></div>
<div class="a" style="left:1214px;top:596px;width:6px;height:6px;background:#d4a22a;border:1px solid #2e2a22"></div>
<div class="a" style="left:1214px;top:604px;width:6px;height:6px;background:#d4a22a;border:1px solid #2e2a22"></div>
<!--E:right-->

<!-- bottom -->
<div class="a" style="left:0;top:668px;width:1239px;height:27px;background:#424548"></div>
<div class="a" style="left:0;top:695px;width:1239px;height:172px;background:#5e6266"></div>
<div class="a" style="left:0;top:817px;width:1239px;height:50px;background:#6a6e71"></div>
<div class="a" style="left:0;top:867px;width:1239px;height:17px;background:#606467;border-top:1px solid #4c5053"></div>
<div class="a" style="left:0;top:884px;width:1239px;height:16px;background:#404346"></div>
<!--B:cam-->
<div class="t" style="left:207.8px;width:600px;text-align:center;top:699.07px;font-size:14.8px;line-height:14.8px;color:#f2f2f2;font-weight:700;">Camera navigator</div>
<svg class="a" style="left:1224px;top:703px" width="8" height="7"><path d="M1 0.8L7 6.2M7 0.8L1 6.2" stroke="#111" stroke-width="1.8"/></svg>
<div class="a" style="left:0px;top:717px;width:609px;height:101px;background:#1c1c1c;"></div>
<svg width="0" height="0" style="position:absolute"><defs>
<filter id="tb" x="-10%" y="-10%" width="120%" height="120%"><feGaussianBlur stdDeviation="1.6"/></filter>
<filter id="noise" x="0" y="0" width="100%" height="100%"><feTurbulence type="fractalNoise" baseFrequency="0.9 0.35" numOctaves="2" seed="3"/><feColorMatrix values="0 0 0 0 0.92  0 0 0 0 0.88  0 0 0 0 0.84  0 0 0 1.6 -0.75"/><feComposite in2="SourceGraphic" operator="in"/></filter>
<filter id="ttex" x="0" y="0" width="100%" height="100%"><feTurbulence type="fractalNoise" baseFrequency="0.5 0.2" numOctaves="2" seed="9"/><feColorMatrix values="0 0 0 0 0.2  0 0 0 0 0.18  0 0 0 0 0.16  0 0 0 -2.4 1.3"/><feComposite in2="SourceGraphic" operator="in"/></filter>
<linearGradient id="skyg" x1="0" y1="0" x2="0" y2="1"><stop offset="0" stop-color="#e2e2e0"/><stop offset="1" stop-color="#c4c6c6"/></linearGradient>
<linearGradient id="pipeD" x1="0" y1="0" x2="0" y2="1"><stop offset="0" stop-color="#86827a"/><stop offset="0.6" stop-color="#6e6a63"/><stop offset="1" stop-color="#5a5650"/></linearGradient>
<linearGradient id="pipeL" x1="0" y1="0" x2="0" y2="1"><stop offset="0" stop-color="#a8a49c"/><stop offset="0.6" stop-color="#8e8a82"/><stop offset="1" stop-color="#6e6a62"/></linearGradient>
<linearGradient id="grg" x1="0" y1="0" x2="0" y2="1"><stop offset="0" stop-color="#8a8684"/><stop offset="0.4" stop-color="#6c5c50"/><stop offset="1" stop-color="#78685a"/></linearGradient>
</defs></svg>
<svg class="a" style="left:-76.5px;top:718px" width="111" height="99" viewBox="0 0 111 99"><rect width="111" height="99" fill="url(#skyg)"/><g filter="url(#tb)"><rect x="60" y="0" width="51" height="40" fill="#8e7452"/><rect x="66" y="6" width="8" height="40" fill="#4e4034"/><path d="M-10 -2 H20 V18 Q28 22 38 23 H-5 V23 H-28 Q-18 22 -10 18 Z" fill="#85817a"/><rect x="-5" y="22" width="121" height="48" rx="6" fill="url(#pipeD)"/><rect x="0" y="70" width="111" height="29" fill="#6e5c4e"/><rect x="0" y="70" width="111" height="8" fill="#8a8a8e" opacity="0.8"/></g><rect x="0" y="22" width="111" height="48" fill="#000" filter="url(#ttex)" opacity="0.4"/><rect x="0" y="70" width="111" height="29" fill="#fff" filter="url(#noise)" opacity="0.5"/><g fill="#d8d8d8" opacity="0.3" filter="url(#tb)"><rect x="2" y="34" width="2" height="4"/><rect x="12" y="42" width="2" height="3"/><rect x="20" y="50" width="3" height="2"/><rect x="-2" y="54" width="2" height="3"/></g></svg>
<svg class="a" style="left:35.5px;top:718px" width="111" height="99" viewBox="0 0 111 99"><rect width="111" height="99" fill="url(#skyg)"/><g filter="url(#tb)"><rect x="85" y="0" width="26" height="45" fill="#8e7452"/><rect x="91" y="6" width="8" height="45" fill="#4e4034"/><path d="M12 -2 H56 V18 Q64 22 74 23 H-5 V23 H-6 Q4 22 12 18 Z" fill="#85817a"/><rect x="-5" y="22" width="121" height="44" rx="6" fill="url(#pipeD)"/><rect x="0" y="64" width="111" height="35" fill="#6e5c4e"/><rect x="0" y="64" width="111" height="8" fill="#8a8a8e" opacity="0.8"/></g><rect x="0" y="22" width="111" height="44" fill="#000" filter="url(#ttex)" opacity="0.4"/><rect x="0" y="64" width="111" height="35" fill="#fff" filter="url(#noise)" opacity="0.5"/><g fill="#d8d8d8" opacity="0.3" filter="url(#tb)"><rect x="24" y="34" width="2" height="4"/><rect x="34" y="42" width="2" height="3"/><rect x="42" y="50" width="3" height="2"/><rect x="20" y="54" width="2" height="3"/></g></svg>
<svg class="a" style="left:147.5px;top:718px" width="111" height="99" viewBox="0 0 111 99"><rect width="111" height="99" fill="url(#skyg)"/><g filter="url(#tb)"><rect x="88" y="5" width="23" height="31" fill="#8e7452"/><rect x="94" y="11" width="8" height="31" fill="#4e4034"/><path d="M36 -2 H62 V24 Q70 28 80 29 H-5 V29 H18 Q28 28 36 24 Z" fill="#85817a"/><rect x="-5" y="28" width="121" height="48" rx="6" fill="url(#pipeD)"/><rect x="4" y="31" width="14" height="42" fill="#b27432" opacity="0.6"/><rect x="20" y="31" width="3" height="38" fill="#d8d8d4" opacity="0.35"/><rect x="24" y="31" width="8" height="42" fill="#b27432" opacity="0.6"/><rect x="34" y="31" width="3" height="38" fill="#d8d8d4" opacity="0.35"/><rect x="0" y="74" width="111" height="25" fill="#6e5c4e"/><rect x="0" y="74" width="111" height="8" fill="#8a8a8e" opacity="0.8"/></g><rect x="0" y="28" width="111" height="48" fill="#000" filter="url(#ttex)" opacity="0.4"/><rect x="0" y="74" width="111" height="25" fill="#fff" filter="url(#noise)" opacity="0.5"/><g fill="#d8d8d8" opacity="0.3" filter="url(#tb)"><rect x="48" y="40" width="2" height="4"/><rect x="58" y="48" width="2" height="3"/><rect x="66" y="56" width="3" height="2"/><rect x="44" y="60" width="2" height="3"/></g></svg>
<svg class="a" style="left:259.5px;top:718px" width="111" height="99" viewBox="0 0 111 99"><rect width="111" height="99" fill="url(#skyg)"/><g filter="url(#tb)"><rect x="100" y="8" width="11" height="22" fill="#8e7452"/><rect x="106" y="14" width="8" height="22" fill="#4e4034"/><path d="M50 -2 H96 V18 Q104 22 114 23 H-5 V23 H32 Q42 22 50 18 Z" fill="#85817a"/><rect x="-5" y="22" width="121" height="52" rx="6" fill="url(#pipeD)"/><rect x="16" y="25" width="12" height="46" fill="#b27432" opacity="0.6"/><rect x="30" y="25" width="3" height="42" fill="#d8d8d4" opacity="0.35"/><rect x="38" y="25" width="9" height="46" fill="#b27432" opacity="0.6"/><rect x="49" y="25" width="3" height="42" fill="#d8d8d4" opacity="0.35"/><path d="M0 86 Q55 72 111 68 V99 H0Z" fill="#6c5a4c"/><path d="M0 86 Q55 72 111 68 V73 Q55 77 0 91Z" fill="#cac8c4" opacity="0.75"/></g><rect x="0" y="22" width="111" height="52" fill="#000" filter="url(#ttex)" opacity="0.4"/><rect x="0" y="72" width="111" height="27" fill="#fff" filter="url(#noise)" opacity="0.5"/><g fill="#d8d8d8" opacity="0.3" filter="url(#tb)"><rect x="62" y="34" width="2" height="4"/><rect x="72" y="42" width="2" height="3"/><rect x="80" y="50" width="3" height="2"/><rect x="58" y="54" width="2" height="3"/></g></svg>
<svg class="a" style="left:371.5px;top:718px" width="111" height="99" viewBox="0 0 111 99"><rect width="111" height="99" fill="url(#skyg)"/><g filter="url(#tb)"><rect x="96" y="0" width="15" height="26" fill="#8e7452"/><rect x="102" y="6" width="8" height="26" fill="#4e4034"/><path d="M45 -2 H95 V14 Q103 18 113 19 H-5 V19 H27 Q37 18 45 14 Z" fill="#85817a"/><rect x="-5" y="18" width="121" height="54" rx="6" fill="url(#pipeL)"/><rect x="14" y="21" width="12" height="48" fill="#b27432" opacity="0.6"/><rect x="28" y="21" width="3" height="44" fill="#d8d8d4" opacity="0.35"/><rect x="36" y="21" width="9" height="48" fill="#b27432" opacity="0.6"/><rect x="47" y="21" width="3" height="44" fill="#d8d8d4" opacity="0.35"/><path d="M0 82 Q55 68 111 64 V99 H0Z" fill="#6c5a4c"/><path d="M0 82 Q55 68 111 64 V69 Q55 73 0 87Z" fill="#cac8c4" opacity="0.75"/></g><rect x="0" y="18" width="111" height="54" fill="#000" filter="url(#ttex)" opacity="0.4"/><rect x="0" y="68" width="111" height="31" fill="#fff" filter="url(#noise)" opacity="0.5"/><g fill="#d8d8d8" opacity="0.3" filter="url(#tb)"><rect x="57" y="30" width="2" height="4"/><rect x="67" y="38" width="2" height="3"/><rect x="75" y="46" width="3" height="2"/><rect x="53" y="50" width="2" height="3"/></g></svg>
<svg class="a" style="left:483.5px;top:718px" width="111" height="99" viewBox="0 0 111 99"><rect width="111" height="99" fill="url(#skyg)"/><g filter="url(#tb)"><path d="M55 -2 H100 V8 Q108 12 118 13 H-5 V13 H37 Q47 12 55 8 Z" fill="#85817a"/><rect x="-5" y="12" width="121" height="56" rx="6" fill="url(#pipeL)"/><rect x="24" y="15" width="12" height="50" fill="#b27432" opacity="0.6"/><rect x="38" y="15" width="3" height="46" fill="#d8d8d4" opacity="0.35"/><rect x="48" y="15" width="8" height="50" fill="#b27432" opacity="0.6"/><rect x="58" y="15" width="3" height="46" fill="#d8d8d4" opacity="0.35"/><path d="M0 78 Q55 60 111 56 V99 H0Z" fill="#6c5a4c"/><path d="M0 76 Q30 64 55 62 V66 Q30 69 0 81Z" fill="#cac8c4" opacity="0.6"/></g><rect x="0" y="12" width="111" height="56" fill="#000" filter="url(#ttex)" opacity="0.4"/><rect x="0" y="60" width="111" height="39" fill="#fff" filter="url(#noise)" opacity="0.5"/><g fill="#d8d8d8" opacity="0.3" filter="url(#tb)"><rect x="67" y="24" width="2" height="4"/><rect x="77" y="32" width="2" height="3"/><rect x="85" y="40" width="3" height="2"/><rect x="63" y="44" width="2" height="3"/></g></svg>
<svg class="a" style="left:596.5px;top:718px" width="111" height="99" viewBox="0 0 111 99"><rect width="111" height="99" fill="url(#skyg)"/><g filter="url(#tb)"><path d="M-20 -2 H-10 V16 Q-2 20 8 21 H-5 V21 H-38 Q-28 20 -20 16 Z" fill="#85817a"/><rect x="-5" y="20" width="121" height="52" rx="6" fill="url(#pipeL)"/><rect x="4" y="23" width="8" height="46" fill="#b27432" opacity="0.6"/><rect x="14" y="23" width="3" height="42" fill="#d8d8d4" opacity="0.35"/><rect x="0" y="70" width="111" height="29" fill="#6e5c4e"/><rect x="0" y="70" width="111" height="8" fill="#8a8a8e" opacity="0.8"/></g><rect x="0" y="20" width="111" height="52" fill="#000" filter="url(#ttex)" opacity="0.4"/><rect x="0" y="70" width="111" height="29" fill="#fff" filter="url(#noise)" opacity="0.5"/><g fill="#d8d8d8" opacity="0.3" filter="url(#tb)"><rect x="-8" y="32" width="2" height="4"/><rect x="2" y="40" width="2" height="3"/><rect x="10" y="48" width="3" height="2"/><rect x="-12" y="52" width="2" height="3"/></g></svg>
<div class="a" style="left:608.5px;top:717px;width:0.5px;height:101px;background:#5e6266;"></div>
<div class="a" style="left:-53.5px;top:791.7px;width:68.0px;height:15.5px;background:rgba(30,26,22,0.78);"></div>
<div class="t" style="left:-319.5px;width:600px;text-align:center;top:793.10px;font-size:13.7px;line-height:13.7px;color:#f0f0f0;font-weight:400;">IMG_3399</div>
<div class="a" style="left:58.5px;top:791.7px;width:68.0px;height:15.5px;background:rgba(30,26,22,0.78);"></div>
<div class="t" style="left:-207.5px;width:600px;text-align:center;top:793.10px;font-size:13.7px;line-height:13.7px;color:#f0f0f0;font-weight:400;">IMG_3400</div>
<div class="a" style="left:170.5px;top:791.7px;width:68.0px;height:15.5px;background:rgba(30,26,22,0.78);"></div>
<div class="t" style="left:-95.5px;width:600px;text-align:center;top:793.10px;font-size:13.7px;line-height:13.7px;color:#f0f0f0;font-weight:400;">IMG_3401</div>
<div class="a" style="left:282.5px;top:791.7px;width:68.0px;height:15.5px;background:rgba(30,26,22,0.78);"></div>
<div class="t" style="left:16.5px;width:600px;text-align:center;top:793.10px;font-size:13.7px;line-height:13.7px;color:#f0f0f0;font-weight:400;">IMG_3402</div>
<div class="a" style="left:394.5px;top:791.7px;width:68.0px;height:15.5px;background:rgba(30,26,22,0.78);"></div>
<div class="t" style="left:128.5px;width:600px;text-align:center;top:793.10px;font-size:13.7px;line-height:13.7px;color:#f0f0f0;font-weight:400;">IMG_3403</div>
<div class="a" style="left:506.5px;top:791.7px;width:68.0px;height:15.5px;background:rgba(30,26,22,0.78);"></div>
<div class="t" style="left:240.5px;width:600px;text-align:center;top:793.10px;font-size:13.7px;line-height:13.7px;color:#f0f0f0;font-weight:400;">IMG_3404</div>
<svg class="a" style="left:1212px;top:718px" width="27" height="99" viewBox="0 0 27 99"><rect width="111" height="99" fill="#76726c"/><g filter="url(#tb)"><ellipse cx="16" cy="26" rx="22" ry="22" fill="#96928a"/><path d="M6 18 Q14 24 12 36" stroke="#d0d0cc" stroke-width="3" fill="none"/><rect x="0" y="56" width="111" height="43" fill="#6e5a4a"/></g><rect x="0" y="60" width="111" height="39" fill="#fff" filter="url(#noise)" opacity="0.5"/></svg>
<div class="a" style="left:1212px;top:792px;width:27px;height:16px;background:rgba(30,26,22,0.75);"></div>
<div class="t" style="left:1213px;top:791.90px;font-size:13.7px;line-height:13.7px;color:#f0f0f0;font-weight:400;">3410</div>
<div class="a" style="left:1227px;top:868px;width:1px;height:15px;background:#45484b;"></div>
<div class="a" style="left:1232px;top:873px;width:7px;height:6px;background:#e0a020;border-radius:1px"></div>
<!--E:cam-->

<!-- dialog -->
<div id="dlg">
<div class="a" style="left:609px;top:467px;width:603px;height:383px;background:#45484b;border-radius:8px 8px 5px 5px;overflow:hidden"><div class="a" style="left:0;top:0;width:603px;height:30px;background:#f2f2f2"></div></div>
<div class="a" style="left:620px;top:507px;width:582px;height:333px;background:#5e6266;box-shadow:inset 0 1px 0 #676b6e"></div>
<div class="t" style="left:637px;top:476.67px;font-size:12.2px;line-height:12.2px;color:#7c7c7c;font-weight:400;">Transform Objects</div>
<svg class="a" style="left:614px;top:471px" width="22" height="21" viewBox="614 471 22 21"><g fill="none" stroke="#a85868" stroke-width="1.7"><path d="M618 479.5 Q616 485 621 487 M629 475.5 Q634 477 633 482"/><ellipse cx="624.8" cy="481.5" rx="7.5" ry="5.2" stroke-dasharray="14 3 20 3"/><path d="M621.5 477 Q622 473.5 625 473.5 Q628 473.5 628.5 477"/><path d="M622 486 Q623 489.5 626 489"/></g><circle cx="632" cy="481.5" r="1.4" fill="#a85868"/><circle cx="624.5" cy="486.5" r="1.4" fill="#a85868"/></svg>
<svg class="a" style="left:1188px;top:476px" width="12" height="12"><path d="M1 1L11 11M11 1L1 11" stroke="#8a8a8a" stroke-width="1.1"/></svg>
<div class="t" style="right:512px;top:525.15px;font-size:14px;line-height:14px;color:#ececec;font-weight:400;text-align:right;">Object:</div>
<div class="a" style="left:736px;top:522px;width:339px;height:20px;background:#6a6e71;"></div>
<div class="t" style="left:743.4px;top:525.65px;font-size:14px;line-height:14px;color:#ececec;font-weight:400;word-spacing:2px">All structured objects</div>
<div class="a" style="left:1088px;top:520px;width:29px;height:24px;background:#6a6e71;border:1px solid #4f5356;box-shadow:inset 1px 1px 0 #74787b"></div>
<div class="a" style="left:1097px;top:526px;width:11px;height:11px;border-radius:50%;background:#e8e0e0;box-shadow:inset 0 0 0 1px #b8aaaa"></div><div class="a" style="left:1099px;top:528px;width:7px;height:7px;border-radius:50%;background:#cc2244"></div>
<div class="a" style="left:630px;top:557.6px;width:248px;height:1.5px;background:#dcdcdc;"></div>
<div class="a" style="left:944px;top:557.6px;width:247px;height:1.5px;background:#dcdcdc;"></div>
<div class="t" style="left:884.6px;top:555.03px;font-size:9.3px;line-height:9.3px;color:#d6a03e;font-weight:700;letter-spacing:0.1px">CONTROLS</div>
<div class="a" style="left:630.5px;top:575.5px;width:11.5px;height:11.5px;background:#f2a31c;border:1px solid #2c2416"></div>
<div class="t" style="right:511.70000000000005px;top:574.65px;font-size:14px;line-height:14px;color:#ececec;font-weight:400;text-align:right;">Translation:</div>
<div class="a" style="left:735px;top:571px;width:148px;height:20px;background:#6a6e71;"></div>
<div class="t" style="left:738.7px;top:574.65px;font-size:14px;line-height:14px;color:#ececec;font-weight:400;">36.0121</div>
<div class="a" style="left:871px;top:573.6px;width:6px;height:6px;background:#d4a22a;border:1px solid #2e2a22"></div>
<div class="a" style="left:871px;top:581.6px;width:6px;height:6px;background:#d4a22a;border:1px solid #2e2a22"></div>
<div class="a" style="left:888.5px;top:571px;width:148.5px;height:20px;background:#6a6e71;"></div>
<div class="t" style="left:892.7px;top:574.65px;font-size:14px;line-height:14px;color:#ececec;font-weight:400;">-17.6666</div>
<div class="a" style="left:1025px;top:573.6px;width:6px;height:6px;background:#d4a22a;border:1px solid #2e2a22"></div>
<div class="a" style="left:1025px;top:581.6px;width:6px;height:6px;background:#d4a22a;border:1px solid #2e2a22"></div>
<div class="a" style="left:1043px;top:571px;width:148px;height:20px;background:#6a6e71;"></div>
<div class="t" style="left:1046.9px;top:574.65px;font-size:14px;line-height:14px;color:#ececec;font-weight:400;">242.7564</div>
<div class="a" style="left:1179px;top:573.6px;width:6px;height:6px;background:#d4a22a;border:1px solid #2e2a22"></div>
<div class="a" style="left:1179px;top:581.6px;width:6px;height:6px;background:#d4a22a;border:1px solid #2e2a22"></div>
<div class="a" style="left:630.5px;top:601.3px;width:11.5px;height:11.5px;background:#f2a31c;border:1px solid #2c2416"></div>
<div class="t" style="right:511.70000000000005px;top:601.15px;font-size:14px;line-height:14px;color:#ececec;font-weight:400;text-align:right;">Rotation:</div>
<div class="a" style="left:735px;top:597.5px;width:148px;height:20.0px;background:#6a6e71;"></div>
<div class="t" style="left:738.7px;top:601.15px;font-size:14px;line-height:14px;color:#ececec;font-weight:400;">104.7519</div>
<div class="a" style="left:871px;top:600.1px;width:6px;height:6px;background:#d4a22a;border:1px solid #2e2a22"></div>
<div class="a" style="left:871px;top:608.1px;width:6px;height:6px;background:#d4a22a;border:1px solid #2e2a22"></div>
<div class="a" style="left:888.5px;top:597.5px;width:148.5px;height:20.0px;background:#6a6e71;"></div>
<div class="t" style="left:892.7px;top:601.15px;font-size:14px;line-height:14px;color:#ececec;font-weight:400;">-16.4209</div>
<div class="a" style="left:1025px;top:600.1px;width:6px;height:6px;background:#d4a22a;border:1px solid #2e2a22"></div>
<div class="a" style="left:1025px;top:608.1px;width:6px;height:6px;background:#d4a22a;border:1px solid #2e2a22"></div>
<div class="a" style="left:1043px;top:597.5px;width:148px;height:20.0px;background:#6a6e71;"></div>
<div class="t" style="left:1046.9px;top:601.15px;font-size:14px;line-height:14px;color:#ececec;font-weight:400;">-82.2630</div>
<div class="a" style="left:1179px;top:600.1px;width:6px;height:6px;background:#d4a22a;border:1px solid #2e2a22"></div>
<div class="a" style="left:1179px;top:608.1px;width:6px;height:6px;background:#d4a22a;border:1px solid #2e2a22"></div>
<div class="a" style="left:630.5px;top:627.5px;width:11.5px;height:11.5px;background:#f2a31c;border:1px solid #2c2416"></div>
<div class="t" style="right:511.70000000000005px;top:627.15px;font-size:14px;line-height:14px;color:#ececec;font-weight:400;text-align:right;">Scale:</div>
<div class="a" style="left:735px;top:623.5px;width:456px;height:19.5px;background:#6a6e71;"></div>
<div class="t" style="left:738.7px;top:627.15px;font-size:14px;line-height:14px;color:#ececec;font-weight:400;">1.0000</div>
<div class="a" style="left:1179px;top:626.1px;width:6px;height:6px;background:#d4a22a;border:1px solid #2e2a22"></div>
<div class="a" style="left:1179px;top:634.1px;width:6px;height:6px;background:#d4a22a;border:1px solid #2e2a22"></div>
<div class="a" style="left:1007.5px;top:651.7px;width:93.29999999999995px;height:25.299999999999955px;background:#6a6e71;border:1px solid #4f5356;box-shadow:inset 1px 1px 0 #74787b"></div>
<div class="t" style="left:1030.8px;top:658.15px;font-size:14px;line-height:14px;color:#ececec;font-weight:400;">Normalize</div>
<div class="a" style="left:1120px;top:651.7px;width:64px;height:25.299999999999955px;background:#6a6e71;border:1px solid #4f5356;box-shadow:inset 1px 1px 0 #74787b"></div>
<div class="t" style="left:1143px;top:658.15px;font-size:14px;line-height:14px;color:#ececec;font-weight:400;">Reset</div>
<div class="a" style="left:630px;top:689.6px;width:240px;height:1.5px;background:#dcdcdc;"></div>
<div class="a" style="left:952px;top:689.6px;width:239px;height:1.5px;background:#dcdcdc;"></div>
<div class="t" style="left:877.3px;top:687.33px;font-size:9.3px;line-height:9.3px;color:#d6a03e;font-weight:700;letter-spacing:0.1px">GIZMO TOOLS</div>
<div class="a" style="left:637px;top:705px;width:264px;height:24.5px;background:#6a6e71;border:1px solid #4f5356;box-shadow:inset 1px 1px 0 #74787b"></div>
<div class="t" style="left:761.4px;top:711.15px;font-size:14px;line-height:14px;color:#ececec;font-weight:400;">Pivot</div>
<div class="a" style="left:920.5px;top:705px;width:263.5px;height:23.5px;background:#6a6e71;border:1px solid #4f5356;box-shadow:inset 1px 1px 0 #74787b"></div>
<div class="t" style="left:1040.9px;top:710.95px;font-size:14px;line-height:14px;color:#ececec;font-weight:400;">Edit</div>
<div class="a" style="left:630px;top:743.4px;width:228.5px;height:1.5px;background:#dcdcdc;"></div>
<div class="a" style="left:963.5px;top:743.4px;width:227.5px;height:1.5px;background:#dcdcdc;"></div>
<div class="t" style="left:866px;top:740.53px;font-size:9.3px;line-height:9.3px;color:#d6a03e;font-weight:700;letter-spacing:0.1px">ALIGNMENT TOOLS</div>
<div class="a" style="left:637px;top:759.6px;width:120px;height:24.199999999999932px;background:#6a6e71;border:1px solid #4f5356;box-shadow:inset 1px 1px 0 #74787b"></div>
<div class="t" style="left:692.2px;top:764.55px;font-size:14px;line-height:14px;color:#ececec;font-weight:400;">Line</div>
<div class="a" style="left:776.4px;top:759.6px;width:118.89999999999998px;height:24.199999999999932px;background:#6a6e71;border:1px solid #4f5356;box-shadow:inset 1px 1px 0 #74787b"></div>
<div class="t" style="left:819.5px;top:764.55px;font-size:14px;line-height:14px;color:#ececec;font-weight:400;">Triangle</div>
<div class="a" style="left:909.5px;top:756.5px;width:2.0px;height:29.5px;background:#d8d8d8;"></div>
<div class="t" style="left:918.6px;top:764.85px;font-size:14px;line-height:14px;color:#ececec;font-weight:400;">Axis:</div>
<div class="a" style="left:1059px;top:760.3px;width:131px;height:20.700000000000045px;background:#6a6e71;"></div>
<div class="t" style="left:1066px;top:764.65px;font-size:14px;line-height:14px;color:#ececec;font-weight:400;">Z-Axis</div>
<div class="a" style="left:630px;top:792.5px;width:561px;height:1.5px;background:#dcdcdc;"></div>
<div class="t" style="left:630.5px;top:809.15px;font-size:14px;line-height:14px;color:#ececec;font-weight:400;word-spacing:1.3px">Number of edited objects: 1</div>
<div class="a" style="left:1088px;top:804px;width:27.5px;height:23.5px;background:#6a6e71;border:1px solid #4f5356;box-shadow:inset 1px 1px 0 #74787b"></div>
<div class="t" style="left:1092.3px;top:809.95px;font-size:14px;line-height:14px;color:#ececec;font-weight:400;">OK</div>
<div class="a" style="left:1134.7px;top:804px;width:49.299999999999955px;height:23.5px;background:#6a6e71;border:1px solid #4f5356;box-shadow:inset 1px 1px 0 #74787b"></div>
<div class="t" style="left:1138.8px;top:809.95px;font-size:14px;line-height:14px;color:#ececec;font-weight:400;">Cancel</div>
<svg class="a" style="left:1009.7px;top:654.3px" width="20" height="20" viewBox="0 0 20 20"><circle cx="10" cy="10" r="7" fill="none" stroke="#cc3348" stroke-width="3.4" stroke-dasharray="38 6" transform="rotate(-101 10 10)"/><path d="M2.2 7.5 L6.5 3.2 L7.2 8.5Z" fill="#cc3348"/><circle cx="9.5" cy="11" r="2.4" fill="#e02050"/><path d="M10 7 L14 10.5 L11 11Z" fill="#e8e8e8"/><path d="M8.5 7.5 L10.5 6.5 L10.5 9Z" fill="#3a8a4a"/></svg>
<svg class="a" style="left:1122px;top:654.3px" width="20" height="20" viewBox="0 0 20 20"><circle cx="10" cy="10" r="7" fill="none" stroke="#cc3348" stroke-width="3.4" stroke-dasharray="38 6" transform="rotate(-101 10 10)"/><path d="M2.2 7.5 L6.5 3.2 L7.2 8.5Z" fill="#cc3348"/><circle cx="9.5" cy="11" r="2.4" fill="#e02050"/><path d="M10 7 L14 10.5 L11 11Z" fill="#e8e8e8"/><path d="M8.5 7.5 L10.5 6.5 L10.5 9Z" fill="#3a8a4a"/></svg>
<svg class="a" style="left:740px;top:708px" width="20" height="20" viewBox="0 0 20 20"><circle cx="9.8" cy="9.8" r="7.3" fill="none" stroke="#b03a4e" stroke-width="2.2" stroke-dasharray="40 6" transform="rotate(-20 9.8 9.8)"/><circle cx="9.8" cy="9.8" r="3" fill="#6a8a92"/></svg>
<svg class="a" style="left:670px;top:760px" width="20" height="20" viewBox="0 0 20 20"><path d="M13.5 4.5 V16 L5 9.5" fill="none" stroke="#c83040" stroke-width="2"/><circle cx="13.5" cy="4" r="1.4" fill="#c83040"/><circle cx="4.5" cy="9" r="1.5" fill="#c83040"/></svg>
<svg class="a" style="left:795px;top:760px" width="24" height="22" viewBox="0 0 24 22"><circle cx="6" cy="10" r="1.7" fill="#c83040"/><circle cx="20.5" cy="3.5" r="1.7" fill="#c83040"/><circle cx="16.5" cy="18" r="1.9" fill="#c83040"/></svg>
</div>
</body></html>
